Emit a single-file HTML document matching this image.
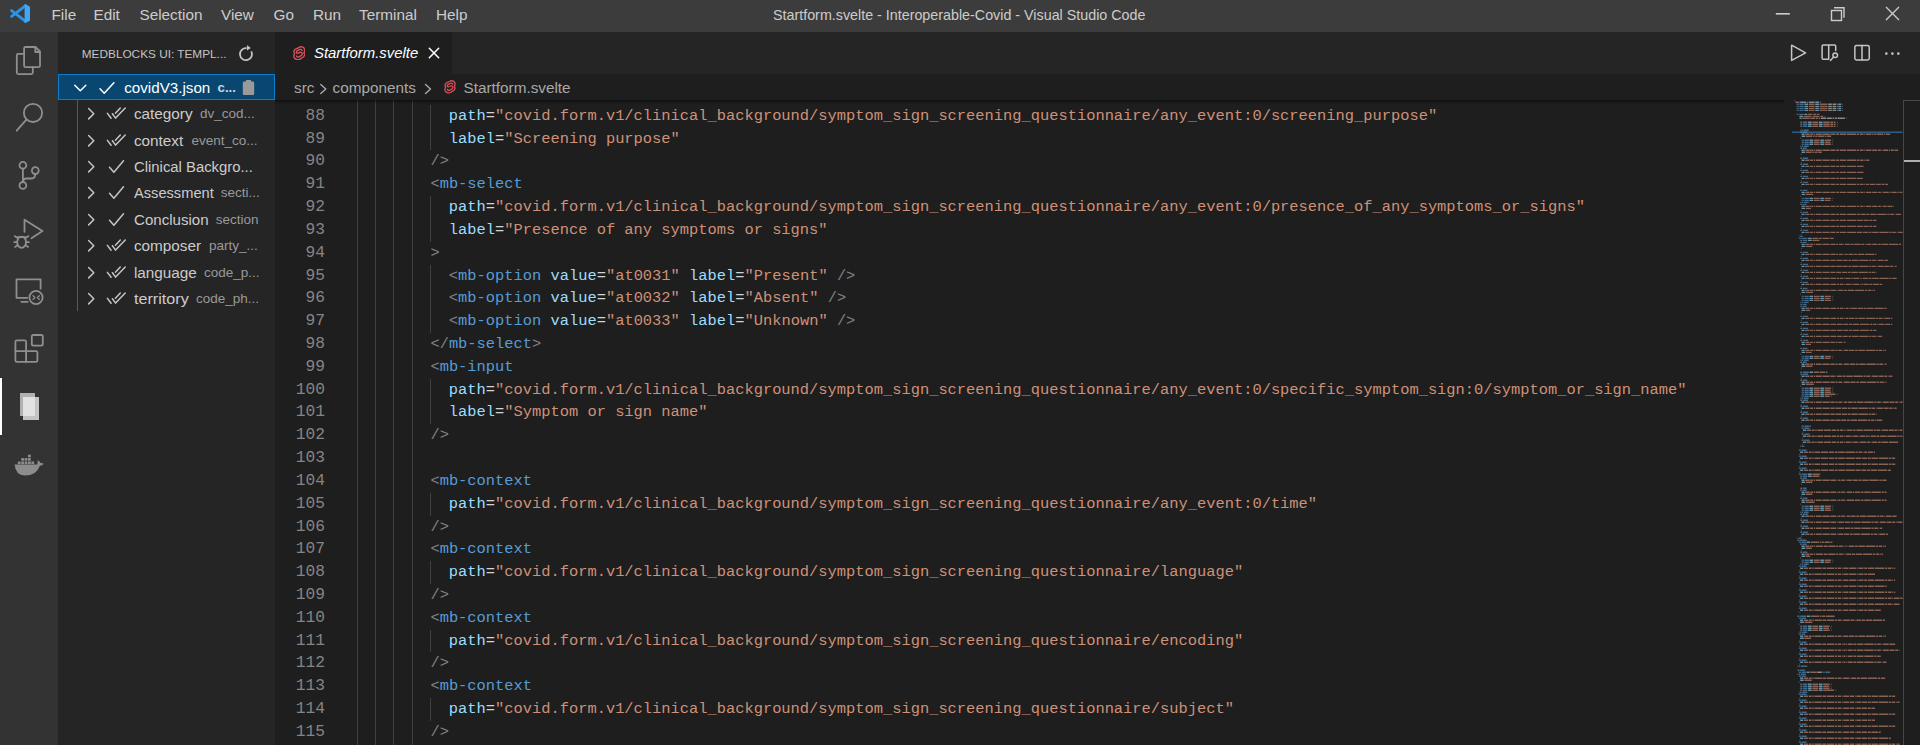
<!DOCTYPE html>
<html><head><meta charset="utf-8">
<style>
*{margin:0;padding:0;box-sizing:border-box}
html,body{width:1920px;height:745px;overflow:hidden;background:#1e1e1e;font-family:"Liberation Sans",sans-serif}
.abs{position:absolute}
#title{left:0;top:0;width:1920px;height:32px;background:#3c3c3c}
.menu{position:absolute;top:0;height:32px;line-height:30px;font-size:15.3px;color:#cccccc}
#wtitle{position:absolute;left:773px;top:0;height:32px;line-height:30px;font-size:14.3px;color:#cccccc;white-space:nowrap}
#act{left:0;top:32px;width:58px;height:713px;background:#333333}
#side{left:58px;top:32px;width:217px;height:713px;background:#252526}
#tabs{left:275px;top:32px;width:1645px;height:42px;background:#252526}
#crumbs{left:275px;top:74px;width:1645px;height:26.4px;background:#1e1e1e}
#editor{left:275px;top:100.4px;width:1645px;height:645px;background:#1e1e1e;overflow:hidden}
.ln{position:absolute;left:0;width:50px;text-align:right;font-family:"Liberation Mono",monospace;font-size:16.2px;line-height:22.82px;color:#858585;white-space:pre}
.cl{position:absolute;left:81.5px;font-family:"Liberation Mono",monospace;font-size:15.4px;line-height:22.82px;color:#d4d4d4;white-space:pre}
.g{position:absolute;width:1px;background:#404040}
.p{color:#808080}.t{color:#569cd6}.a{color:#9cdcfe}.s{color:#ce9178}
.row{position:absolute;left:0;width:217px;height:26.4px;font-size:15.3px;line-height:26.4px;color:#cccccc;white-space:nowrap}
.lab{height:26.4px;line-height:27.8px;font-size:15.3px;color:#cccccc;white-space:nowrap}
.dsc{height:26.4px;line-height:28.4px;font-size:13.5px;color:#999999;white-space:nowrap}
</style></head><body>
<div id="title" class="abs">
  <svg class="abs" style="left:0;top:0" width="40" height="32">
    <path d="M25.6 5.6 L11.6 16.4 M25.6 21.4 L11.6 10.6" stroke="#2b93e6" stroke-width="2.9" stroke-linecap="round"/>
    <path d="M24.6 4 L29.3 6.3 Q30 6.7 30 7.5 V19.9 Q30 20.7 29.3 21.1 L24.6 23.2 Z" fill="#3ea8f2"/>
  </svg>
  <div class="menu" style="left:51.5px">File</div>
  <div class="menu" style="left:93.5px">Edit</div>
  <div class="menu" style="left:139.5px">Selection</div>
  <div class="menu" style="left:221px">View</div>
  <div class="menu" style="left:273.5px">Go</div>
  <div class="menu" style="left:313px">Run</div>
  <div class="menu" style="left:359px">Terminal</div>
  <div class="menu" style="left:436px">Help</div>
  <div id="wtitle">Startform.svelte - Interoperable-Covid - Visual Studio Code</div>
  <svg class="abs" style="left:1760px;top:0" width="160" height="32">
    <rect x="1775.8" y="13" width="14" height="1.6" fill="#cccccc" transform="translate(-1760,0)"/>
    <g fill="none" stroke="#cccccc" stroke-width="1.4">
      <rect x="71.5" y="10.5" width="10" height="10"/>
      <path d="M74 7.7 H84 V17.7"/>
      <path d="M126 7 L139 20 M139 7 L126 20"/>
    </g>
  </svg>
</div>
<div id="act" class="abs">
  <svg class="abs" style="left:0;top:0" width="58" height="713" fill="none" stroke="#8f8f8f" stroke-width="1.8" stroke-linejoin="round" stroke-linecap="round">
    <path d="M25.6 15 H35.5 L40 19.5 V33.7 Q40 35.2 38.5 35.2 H25.6 Q24.1 35.2 24.1 33.7 V16.5 Q24.1 15 25.6 15 Z"/>
    <path d="M35.3 15.2 V20 H39.8"/>
    <path d="M24.1 21.8 H18.3 Q16.8 21.8 16.8 23.3 V40.6 Q16.8 42.1 18.3 42.1 H31.3 Q32.8 42.1 32.8 40.6 V35.2"/>
    <circle cx="33" cy="80.9" r="9.1"/>
    <path d="M26.6 87.4 L16.7 98.7"/>
    <circle cx="22.9" cy="133.2" r="3.4"/>
    <circle cx="35.3" cy="138.6" r="3.4"/>
    <circle cx="22.9" cy="153.4" r="3.4"/>
    <path d="M22.9 136.6 V150"/>
    <path d="M35.3 142 Q35.3 146.5 31.5 146.5 H26.5 Q22.9 146.5 22.9 150"/>
    <path d="M24.5 199.8 V187.7 L42.5 199 L31.5 206.3"/>
    <ellipse cx="21.6" cy="210.2" rx="4.4" ry="5.6"/>
    <path d="M17.2 205.2 H26"/>
    <path d="M14.8 204.1 L17.2 205.9 M14.3 210.2 H17.2 M15.1 214.9 L17.5 213.3 M28.4 204.1 L26 205.9 M28.9 210.2 H26 M28.1 214.9 L25.7 213.3"/>
    <path d="M27.2 265.8 H16.5 V247.3 H40.6 V256.7"/>
    <path d="M21.3 269.8 H27.7"/>
    <circle cx="36" cy="265.5" r="6.6"/>
    <path d="M33 263.8 L35 265.6 L33 267.4 M39.4 263.8 L37.4 265.6 L39.4 267.4" stroke-width="1.3"/>
    <path d="M17 308.4 H24.6 Q26.1 308.4 26.1 309.9 V319.1 H35.9 Q37.4 319.1 37.4 320.6 V328.4 Q37.4 329.9 35.9 329.9 H16.9 Q15.4 329.9 15.4 328.4 V309.9 Q15.4 308.4 17 308.4 Z"/>
    <path d="M15.4 319.1 H26.1 V329.9"/>
    <rect x="31.8" y="303" width="11" height="10.7" rx="1.6"/>
  </svg>
  <div class="abs" style="left:0;top:345.8px;width:2px;height:57.6px;background:#ffffff"></div>
  <div class="abs" style="left:19.7px;top:360.6px;width:15.8px;height:23.4px;background:#b0b0b0"></div>
  <div class="abs" style="left:23.4px;top:364.6px;width:15.6px;height:23.4px;background:#c4c4c4"></div>
  <div class="abs" style="left:23.4px;top:364.6px;width:12.1px;height:19.4px;background:#e2e2e2"></div>
  <svg class="abs" style="left:14px;top:420px" width="32" height="26" viewBox="0 0 32 26" fill="#8c8c8c">
    <rect x="3.8" y="9.5" width="2.8" height="2.6"/><rect x="7.2" y="9.5" width="2.8" height="2.6"/><rect x="10.6" y="9.5" width="2.8" height="2.6"/><rect x="14" y="9.5" width="2.8" height="2.6"/><rect x="17.4" y="9.5" width="2.8" height="2.6"/>
    <rect x="7.2" y="6.1" width="2.8" height="2.6"/><rect x="10.6" y="6.1" width="2.8" height="2.6"/><rect x="14" y="6.1" width="2.8" height="2.6"/>
    <rect x="14" y="2.7" width="2.8" height="2.6"/>
    <path d="M0.6 12.6 H23.2 Q24 10.4 23.5 8.2 Q25.7 9 26.5 11 Q28.7 10.6 29.6 12 Q28.2 13.7 25.9 13.7 Q22.3 23.6 11 23.6 Q1.6 23.6 0.6 12.6 Z"/>
  </svg>
</div>
<div id="side" class="abs">
  <div class="abs" style="left:23.8px;top:11.5px;height:20px;line-height:20px;font-size:11.8px;color:#c4c4c4;white-space:nowrap">MEDBLOCKS UI: TEMPL...</div>
  <svg class="abs" style="left:178px;top:10.8px" width="20" height="20">
    <path d="M15.3 8.4 A6 6 0 1 1 10.6 5.2" fill="none" stroke="#c5c5c5" stroke-width="1.8"/>
    <path d="M10.9 2 L14.8 4.9 L11 7.6 Z" fill="#c5c5c5"/>
  </svg>
  <div class="abs" style="left:0;top:41.8px;width:217px;height:26.4px;background:#094771;border:1px solid #0a7dcf"></div>
  <svg class="abs" style="left:0;top:41.8px" width="217" height="27" fill="none" stroke="#ffffff" stroke-width="1.5" stroke-linecap="round" stroke-linejoin="round">
    <path d="M16.8 11.3 L22.3 16.7 L27.8 11.3"/>
    <path d="M42 14.8 L46.2 19.2 L55.9 8.7"/>
  </svg>
  <div class="abs" style="left:66.2px;top:41.8px;height:26.4px;line-height:27.6px;font-size:15.2px;color:#ffffff;white-space:nowrap">covidV3.json</div>
  <div class="abs" style="left:159.6px;top:41.8px;height:26.4px;line-height:28px;font-size:13.2px;color:#c8d8ea;white-space:nowrap;font-weight:bold">c...</div>
  <svg class="abs" style="left:184px;top:47px" width="14" height="17">
    <rect x="0.8" y="2.6" width="11.4" height="13.4" rx="1.3" fill="#9a9a9a"/>
    <rect x="3.8" y="1" width="5.4" height="3.4" rx="1" fill="#9a9a9a"/>
  </svg>
  <div class="abs" style="left:19.2px;top:68.2px;width:1px;height:211.2px;background:#585858"></div>
  <svg class="abs" style="left:0;top:68.2px" width="80" height="27" fill="none" stroke="#c5c5c5" stroke-width="1.5" stroke-linecap="round" stroke-linejoin="round">
    <path d="M30.6 8.5 L35.8 13.7 L30.6 18.9"/>
    <path d="M49.4 13.4 L53.1 18.2 M54.4 13.7 L57.6 18.1 L67.2 8.1 M57.4 13.3 L62.3 8.1"/>
  </svg>
  <div class="abs lab" style="left:75.9px;top:68.2px">category</div>
  <div class="abs dsc" style="left:142.0px;top:68.2px">dv_cod...</div>
  <svg class="abs" style="left:0;top:94.6px" width="80" height="27" fill="none" stroke="#c5c5c5" stroke-width="1.5" stroke-linecap="round" stroke-linejoin="round">
    <path d="M30.6 8.5 L35.8 13.7 L30.6 18.9"/>
    <path d="M49.4 13.4 L53.1 18.2 M54.4 13.7 L57.6 18.1 L67.2 8.1 M57.4 13.3 L62.3 8.1"/>
  </svg>
  <div class="abs lab" style="left:75.9px;top:94.6px">context</div>
  <div class="abs dsc" style="left:133.5px;top:94.6px">event_co...</div>
  <svg class="abs" style="left:0;top:121.0px" width="80" height="27" fill="none" stroke="#c5c5c5" stroke-width="1.5" stroke-linecap="round" stroke-linejoin="round">
    <path d="M30.6 8.5 L35.8 13.7 L30.6 18.9"/>
    <path d="M51.5 14.2 L55.9 19.2 L65.5 7.8"/>
  </svg>
  <div class="abs lab" style="left:75.9px;top:121.0px;transform:scaleX(0.971);transform-origin:0 0">Clinical Backgro...</div>
  <svg class="abs" style="left:0;top:147.4px" width="80" height="27" fill="none" stroke="#c5c5c5" stroke-width="1.5" stroke-linecap="round" stroke-linejoin="round">
    <path d="M30.6 8.5 L35.8 13.7 L30.6 18.9"/>
    <path d="M51.5 14.2 L55.9 19.2 L65.5 7.8"/>
  </svg>
  <div class="abs lab" style="left:75.9px;top:147.4px;transform:scaleX(0.957);transform-origin:0 0">Assessment</div>
  <div class="abs dsc" style="left:162.7px;top:147.4px">secti...</div>
  <svg class="abs" style="left:0;top:173.8px" width="80" height="27" fill="none" stroke="#c5c5c5" stroke-width="1.5" stroke-linecap="round" stroke-linejoin="round">
    <path d="M30.6 8.5 L35.8 13.7 L30.6 18.9"/>
    <path d="M51.5 14.2 L55.9 19.2 L65.5 7.8"/>
  </svg>
  <div class="abs lab" style="left:75.9px;top:173.8px;transform:scaleX(0.985);transform-origin:0 0">Conclusion</div>
  <div class="abs dsc" style="left:157.7px;top:173.8px">section</div>
  <svg class="abs" style="left:0;top:200.2px" width="80" height="27" fill="none" stroke="#c5c5c5" stroke-width="1.5" stroke-linecap="round" stroke-linejoin="round">
    <path d="M30.6 8.5 L35.8 13.7 L30.6 18.9"/>
    <path d="M49.4 13.4 L53.1 18.2 M54.4 13.7 L57.6 18.1 L67.2 8.1 M57.4 13.3 L62.3 8.1"/>
  </svg>
  <div class="abs lab" style="left:75.9px;top:200.2px">composer</div>
  <div class="abs dsc" style="left:151.0px;top:200.2px">party_...</div>
  <svg class="abs" style="left:0;top:226.6px" width="80" height="27" fill="none" stroke="#c5c5c5" stroke-width="1.5" stroke-linecap="round" stroke-linejoin="round">
    <path d="M30.6 8.5 L35.8 13.7 L30.6 18.9"/>
    <path d="M49.4 13.4 L53.1 18.2 M54.4 13.7 L57.6 18.1 L67.2 8.1 M57.4 13.3 L62.3 8.1"/>
  </svg>
  <div class="abs lab" style="left:75.9px;top:226.6px">language</div>
  <div class="abs dsc" style="left:146.0px;top:226.6px">code_p...</div>
  <svg class="abs" style="left:0;top:253.0px" width="80" height="27" fill="none" stroke="#c5c5c5" stroke-width="1.5" stroke-linecap="round" stroke-linejoin="round">
    <path d="M30.6 8.5 L35.8 13.7 L30.6 18.9"/>
    <path d="M49.4 13.4 L53.1 18.2 M54.4 13.7 L57.6 18.1 L67.2 8.1 M57.4 13.3 L62.3 8.1"/>
  </svg>
  <div class="abs lab" style="left:75.9px;top:253.0px;transform:scaleX(1.056);transform-origin:0 0">territory</div>
  <div class="abs dsc" style="left:138.0px;top:253.0px">code_ph...</div>
</div>
<div id="tabs" class="abs">
  <div class="abs" style="left:0;top:0;width:177px;height:42px;background:#1e1e1e"></div>
  <svg class="abs" style="left:17.7px;top:13.5px" width="12.5" height="14.5" viewBox="0 0 12.2 14.2"><g fill="none" stroke="#d9505a" stroke-width="1.35" stroke-linecap="round" stroke-linejoin="round">
    <path d="M6.6 1 C8.6 0.3 10.9 1.4 11.3 3.4 C11.6 4.6 11.3 5.8 10.6 6.7 C11.5 8 11.3 9.8 10.1 10.8 L6.6 13.1 C4.6 14.1 1.6 13.1 0.9 10.8 C0.6 9.6 0.8 8.4 1.5 7.4 C0.7 6.1 0.9 4.3 2.1 3.3 Z"/>
    <path d="M8.9 4.4 C8.4 3.3 7.1 3 6.1 3.6 L3.7 5.1 C2.9 5.7 3.1 6.9 4.1 7.1 C4.6 7.2 5.1 7.1 5.7 6.8 L6.6 6.3 C7.5 5.9 8.7 6.4 9 7.3 C9.2 8 8.9 8.7 8.3 9.1 L5.9 10.6 C4.9 11.2 3.6 10.7 3.3 9.7"/>
  </g></svg>
  <div class="abs" style="left:39px;top:0;height:42px;line-height:43.6px;font-size:14.9px;font-style:italic;color:#ffffff;white-space:nowrap">Startform.svelte</div>
  <svg class="abs" style="left:153px;top:15px" width="12" height="12" fill="none" stroke="#ffffff" stroke-width="1.5" stroke-linecap="round">
    <path d="M1.3 1.3 L10.7 10.7 M10.7 1.3 L1.3 10.7"/>
  </svg>
  <svg class="abs" style="left:1510px;top:8px" width="130" height="26" fill="none" stroke="#c5c5c5" stroke-width="1.5" stroke-linejoin="round" stroke-linecap="round">
    <path d="M6.6 5.2 L20.6 12.8 L6.6 20.4 Z"/>
    <path d="M43.7 19.2 H38.3 Q37.1 19.2 37.1 18 V6.1 Q37.1 4.9 38.3 4.9 H49.5 Q50.7 4.9 50.7 6.1 V10.6 M43.7 5 V19.2"/>
    <circle cx="50.2" cy="15.3" r="2.3"/>
    <path d="M48.6 16.9 L45.4 20.4"/>
    <rect x="69.85" y="5.55" width="14.4" height="14.4" rx="1.6"/>
    <path d="M77 5.6 V19.9"/>
    <circle cx="101.3" cy="13.6" r="1.3" fill="#c5c5c5" stroke="none"/>
    <circle cx="107.4" cy="13.6" r="1.3" fill="#c5c5c5" stroke="none"/>
    <circle cx="113.3" cy="13.6" r="1.3" fill="#c5c5c5" stroke="none"/>
  </svg>
</div>
<div id="crumbs" class="abs">
  <div class="abs" style="left:19px;top:0;height:26.4px;line-height:27.1px;font-size:15.3px;color:#a9a9a9;white-space:nowrap">src</div>
  <div class="abs" style="left:57.5px;top:0;height:26.4px;line-height:27.1px;font-size:15.3px;color:#a9a9a9;white-space:nowrap">components</div>
  <div class="abs" style="left:188.5px;top:0;height:26.4px;line-height:27.1px;font-size:15.3px;color:#a9a9a9;white-space:nowrap">Startform.svelte</div>
  <svg class="abs" style="left:168.6px;top:6.3px" width="12" height="13.6" viewBox="0 0 12.2 14.2"><g fill="none" stroke="#d9505a" stroke-width="1.35" stroke-linecap="round" stroke-linejoin="round">
    <path d="M6.6 1 C8.6 0.3 10.9 1.4 11.3 3.4 C11.6 4.6 11.3 5.8 10.6 6.7 C11.5 8 11.3 9.8 10.1 10.8 L6.6 13.1 C4.6 14.1 1.6 13.1 0.9 10.8 C0.6 9.6 0.8 8.4 1.5 7.4 C0.7 6.1 0.9 4.3 2.1 3.3 Z"/>
    <path d="M8.9 4.4 C8.4 3.3 7.1 3 6.1 3.6 L3.7 5.1 C2.9 5.7 3.1 6.9 4.1 7.1 C4.6 7.2 5.1 7.1 5.7 6.8 L6.6 6.3 C7.5 5.9 8.7 6.4 9 7.3 C9.2 8 8.9 8.7 8.3 9.1 L5.9 10.6 C4.9 11.2 3.6 10.7 3.3 9.7"/>
  </g></svg>
  <svg class="abs" style="left:0;top:0" width="300" height="27" fill="none" stroke="#a9a9a9" stroke-width="1.4" stroke-linecap="round" stroke-linejoin="round">
    <path d="M45.8 10.4 L50.8 15 L45.8 19.6"/>
    <path d="M150.5 10.4 L155.5 15 L150.5 19.6"/>
  </svg>
</div>
<div id="editor" class="abs">
<div class="ln" style="top:4.40px">88</div>
<div class="cl" style="top:4.40px">          <span class="a">path</span>=<span class="s">&quot;covid.form.v1/clinical_background/symptom_sign_screening_questionnaire/any_event:0/screening_purpose&quot;</span></div>
<div class="ln" style="top:27.22px">89</div>
<div class="cl" style="top:27.22px">          <span class="a">label</span>=<span class="s">&quot;Screening purpose&quot;</span></div>
<div class="ln" style="top:50.04px">90</div>
<div class="cl" style="top:50.04px">        <span class="p">/&gt;</span></div>
<div class="ln" style="top:72.86px">91</div>
<div class="cl" style="top:72.86px">        <span class="p">&lt;</span><span class="t">mb-select</span></div>
<div class="ln" style="top:95.68px">92</div>
<div class="cl" style="top:95.68px">          <span class="a">path</span>=<span class="s">&quot;covid.form.v1/clinical_background/symptom_sign_screening_questionnaire/any_event:0/presence_of_any_symptoms_or_signs&quot;</span></div>
<div class="ln" style="top:118.50px">93</div>
<div class="cl" style="top:118.50px">          <span class="a">label</span>=<span class="s">&quot;Presence of any symptoms or signs&quot;</span></div>
<div class="ln" style="top:141.32px">94</div>
<div class="cl" style="top:141.32px">        <span class="p">&gt;</span></div>
<div class="ln" style="top:164.14px">95</div>
<div class="cl" style="top:164.14px">          <span class="p">&lt;</span><span class="t">mb-option</span> <span class="a">value</span>=<span class="s">&quot;at0031&quot;</span> <span class="a">label</span>=<span class="s">&quot;Present&quot;</span> <span class="p">/&gt;</span></div>
<div class="ln" style="top:186.96px">96</div>
<div class="cl" style="top:186.96px">          <span class="p">&lt;</span><span class="t">mb-option</span> <span class="a">value</span>=<span class="s">&quot;at0032&quot;</span> <span class="a">label</span>=<span class="s">&quot;Absent&quot;</span> <span class="p">/&gt;</span></div>
<div class="ln" style="top:209.78px">97</div>
<div class="cl" style="top:209.78px">          <span class="p">&lt;</span><span class="t">mb-option</span> <span class="a">value</span>=<span class="s">&quot;at0033&quot;</span> <span class="a">label</span>=<span class="s">&quot;Unknown&quot;</span> <span class="p">/&gt;</span></div>
<div class="ln" style="top:232.60px">98</div>
<div class="cl" style="top:232.60px">        <span class="p">&lt;/</span><span class="t">mb-select</span><span class="p">&gt;</span></div>
<div class="ln" style="top:255.42px">99</div>
<div class="cl" style="top:255.42px">        <span class="p">&lt;</span><span class="t">mb-input</span></div>
<div class="ln" style="top:278.24px">100</div>
<div class="cl" style="top:278.24px">          <span class="a">path</span>=<span class="s">&quot;covid.form.v1/clinical_background/symptom_sign_screening_questionnaire/any_event:0/specific_symptom_sign:0/symptom_or_sign_name&quot;</span></div>
<div class="ln" style="top:301.06px">101</div>
<div class="cl" style="top:301.06px">          <span class="a">label</span>=<span class="s">&quot;Symptom or sign name&quot;</span></div>
<div class="ln" style="top:323.88px">102</div>
<div class="cl" style="top:323.88px">        <span class="p">/&gt;</span></div>
<div class="ln" style="top:346.70px">103</div>
<div class="ln" style="top:369.52px">104</div>
<div class="cl" style="top:369.52px">        <span class="p">&lt;</span><span class="t">mb-context</span></div>
<div class="ln" style="top:392.34px">105</div>
<div class="cl" style="top:392.34px">          <span class="a">path</span>=<span class="s">&quot;covid.form.v1/clinical_background/symptom_sign_screening_questionnaire/any_event:0/time&quot;</span></div>
<div class="ln" style="top:415.16px">106</div>
<div class="cl" style="top:415.16px">        <span class="p">/&gt;</span></div>
<div class="ln" style="top:437.98px">107</div>
<div class="cl" style="top:437.98px">        <span class="p">&lt;</span><span class="t">mb-context</span></div>
<div class="ln" style="top:460.80px">108</div>
<div class="cl" style="top:460.80px">          <span class="a">path</span>=<span class="s">&quot;covid.form.v1/clinical_background/symptom_sign_screening_questionnaire/language&quot;</span></div>
<div class="ln" style="top:483.62px">109</div>
<div class="cl" style="top:483.62px">        <span class="p">/&gt;</span></div>
<div class="ln" style="top:506.44px">110</div>
<div class="cl" style="top:506.44px">        <span class="p">&lt;</span><span class="t">mb-context</span></div>
<div class="ln" style="top:529.26px">111</div>
<div class="cl" style="top:529.26px">          <span class="a">path</span>=<span class="s">&quot;covid.form.v1/clinical_background/symptom_sign_screening_questionnaire/encoding&quot;</span></div>
<div class="ln" style="top:552.08px">112</div>
<div class="cl" style="top:552.08px">        <span class="p">/&gt;</span></div>
<div class="ln" style="top:574.90px">113</div>
<div class="cl" style="top:574.90px">        <span class="p">&lt;</span><span class="t">mb-context</span></div>
<div class="ln" style="top:597.72px">114</div>
<div class="cl" style="top:597.72px">          <span class="a">path</span>=<span class="s">&quot;covid.form.v1/clinical_background/symptom_sign_screening_questionnaire/subject&quot;</span></div>
<div class="ln" style="top:620.54px">115</div>
<div class="cl" style="top:620.54px">        <span class="p">/&gt;</span></div>
<div class="g" style="left:81.50px;top:0.00px;height:645.00px"></div>
<div class="g" style="left:99.98px;top:0.00px;height:645.00px"></div>
<div class="g" style="left:118.46px;top:0.00px;height:645.00px"></div>
<div class="g" style="left:136.94px;top:0.00px;height:645.00px"></div>
<div class="g" style="left:155.42px;top:4.40px;height:45.64px"></div>
<div class="g" style="left:155.42px;top:95.68px;height:45.64px"></div>
<div class="g" style="left:155.42px;top:164.14px;height:68.46px"></div>
<div class="g" style="left:155.42px;top:278.24px;height:45.64px"></div>
<div class="g" style="left:155.42px;top:392.34px;height:22.82px"></div>
<div class="g" style="left:155.42px;top:460.80px;height:22.82px"></div>
<div class="g" style="left:155.42px;top:529.26px;height:22.82px"></div>
<div class="g" style="left:155.42px;top:597.72px;height:22.82px"></div>
<svg class="abs" style="left:1509px;top:0" width="120" height="645">
<rect x="7.900000000000091" y="31.4" width="110.7" height="1.7" fill="#2a5a85"/>
<path fill="#808080" opacity="0.6" d="M10.40 -0.3h0.72v1.3h-0.72zM11.12 1.6h0.72v1.3h-0.72zM34.88 1.6h0.72v1.3h-0.72zM12.56 3.6h0.72v1.3h-0.72zM57.92 3.6h0.72v1.3h-0.72zM12.56 5.7h0.72v1.3h-0.72zM57.92 5.7h0.72v1.3h-0.72zM12.56 7.7h0.72v1.3h-0.72zM57.92 7.7h0.72v1.3h-0.72zM12.56 9.7h0.72v1.3h-0.72zM57.92 9.7h0.72v1.3h-0.72zM12.56 13.7h0.72v1.3h-0.72zM34.88 13.7h0.72v1.3h-0.72zM39.92 15.7h0.72v1.3h-0.72zM62.24 17.6h0.72v1.3h-0.72zM16.16 21.6h0.72v1.3h-0.72zM52.88 21.6h0.72v1.3h-0.72zM16.16 23.6h0.72v1.3h-0.72zM52.88 23.6h0.72v1.3h-0.72zM16.16 25.6h0.72v1.3h-0.72zM52.88 25.6h0.72v1.3h-0.72zM16.16 29.6h0.72v1.3h-0.72zM24.08 29.6h0.72v1.3h-0.72zM16.16 31.6h0.72v1.3h-0.72zM16.16 37.6h0.72v1.3h-0.72zM17.60 39.6h0.72v1.3h-0.72zM48.56 39.6h0.72v1.3h-0.72zM17.60 41.6h0.72v1.3h-0.72zM47.84 41.6h0.72v1.3h-0.72zM17.60 43.6h0.72v1.3h-0.72zM48.56 43.6h0.72v1.3h-0.72zM16.16 45.6h0.72v1.3h-0.72zM24.08 45.6h0.72v1.3h-0.72zM16.16 47.6h0.72v1.3h-0.72zM16.88 53.6h0.72v1.3h-0.72zM16.16 57.6h0.72v1.3h-0.72zM16.88 61.6h0.72v1.3h-0.72zM16.16 63.6h0.72v1.3h-0.72zM16.88 67.7h0.72v1.3h-0.72zM16.16 69.7h0.72v1.3h-0.72zM16.88 73.7h0.72v1.3h-0.72zM16.16 75.7h0.72v1.3h-0.72zM16.88 79.7h0.72v1.3h-0.72zM16.16 81.7h0.72v1.3h-0.72zM16.88 85.7h0.72v1.3h-0.72zM16.16 89.7h0.72v1.3h-0.72zM16.16 95.7h0.72v1.3h-0.72zM17.60 97.7h0.72v1.3h-0.72zM48.56 97.7h0.72v1.3h-0.72zM17.60 99.7h0.72v1.3h-0.72zM47.84 99.7h0.72v1.3h-0.72zM16.16 101.7h0.72v1.3h-0.72zM24.08 101.7h0.72v1.3h-0.72zM16.16 103.7h0.72v1.3h-0.72zM16.88 109.7h0.72v1.3h-0.72zM16.16 111.7h0.72v1.3h-0.72zM16.88 115.7h0.72v1.3h-0.72zM16.16 117.7h0.72v1.3h-0.72zM16.88 121.7h0.72v1.3h-0.72zM16.16 123.7h0.72v1.3h-0.72zM16.88 127.7h0.72v1.3h-0.72zM16.16 129.7h0.72v1.3h-0.72zM16.88 133.7h0.72v1.3h-0.72zM14.72 135.7h0.72v1.3h-0.72zM18.32 135.7h0.72v1.3h-0.72zM14.72 137.7h0.72v1.3h-0.72zM49.28 137.7h0.72v1.3h-0.72zM16.16 139.7h0.72v1.3h-0.72zM34.88 139.7h0.72v1.3h-0.72zM16.16 141.7h0.72v1.3h-0.72zM16.88 147.7h0.72v1.3h-0.72zM16.16 151.7h0.72v1.3h-0.72zM16.88 155.7h0.72v1.3h-0.72zM16.16 157.7h0.72v1.3h-0.72zM16.88 161.7h0.72v1.3h-0.72zM16.16 163.7h0.72v1.3h-0.72zM16.88 167.7h0.72v1.3h-0.72zM16.16 169.7h0.72v1.3h-0.72zM16.88 173.7h0.72v1.3h-0.72zM16.16 175.7h0.72v1.3h-0.72zM16.88 179.7h0.72v1.3h-0.72zM16.16 181.7h0.72v1.3h-0.72zM16.88 185.7h0.72v1.3h-0.72zM16.16 187.7h0.72v1.3h-0.72zM16.16 193.7h0.72v1.3h-0.72zM17.60 195.7h0.72v1.3h-0.72zM48.56 195.7h0.72v1.3h-0.72zM17.60 197.7h0.72v1.3h-0.72zM47.84 197.7h0.72v1.3h-0.72zM17.60 199.7h0.72v1.3h-0.72zM48.56 199.7h0.72v1.3h-0.72zM16.16 201.7h0.72v1.3h-0.72zM24.08 201.7h0.72v1.3h-0.72zM16.16 203.7h0.72v1.3h-0.72zM16.16 205.7h0.72v1.3h-0.72zM16.88 211.7h0.72v1.3h-0.72zM16.16 215.7h0.72v1.3h-0.72zM16.88 219.7h0.72v1.3h-0.72zM16.16 221.7h0.72v1.3h-0.72zM16.88 225.7h0.72v1.3h-0.72zM16.16 227.7h0.72v1.3h-0.72zM16.88 231.7h0.72v1.3h-0.72zM16.16 233.7h0.72v1.3h-0.72zM16.88 237.7h0.72v1.3h-0.72zM16.16 239.7h0.72v1.3h-0.72zM16.16 247.7h0.72v1.3h-0.72zM16.16 253.7h0.72v1.3h-0.72zM17.60 255.7h0.72v1.3h-0.72zM48.56 255.7h0.72v1.3h-0.72zM17.60 257.6h0.72v1.3h-0.72zM47.84 257.6h0.72v1.3h-0.72zM16.16 259.6h0.72v1.3h-0.72zM24.08 259.6h0.72v1.3h-0.72zM16.16 261.6h0.72v1.3h-0.72zM16.88 267.6h0.72v1.3h-0.72zM16.16 271.6h0.72v1.3h-0.72zM42.80 271.6h0.72v1.3h-0.72zM16.16 273.6h0.72v1.3h-0.72zM16.88 277.6h0.72v1.3h-0.72zM16.16 279.6h0.72v1.3h-0.72zM16.16 285.6h0.72v1.3h-0.72zM17.60 287.6h0.72v1.3h-0.72zM48.56 287.6h0.72v1.3h-0.72zM17.60 289.6h0.72v1.3h-0.72zM47.84 289.6h0.72v1.3h-0.72zM17.60 291.6h0.72v1.3h-0.72zM48.56 291.6h0.72v1.3h-0.72zM17.60 293.6h0.72v1.3h-0.72zM52.88 293.6h0.72v1.3h-0.72zM17.60 295.6h0.72v1.3h-0.72zM47.12 295.6h0.72v1.3h-0.72zM16.16 297.6h0.72v1.3h-0.72zM24.08 297.6h0.72v1.3h-0.72zM16.16 299.6h0.72v1.3h-0.72zM16.88 303.6h0.72v1.3h-0.72zM16.16 305.6h0.72v1.3h-0.72zM16.88 309.6h0.72v1.3h-0.72zM16.16 311.6h0.72v1.3h-0.72zM16.88 315.6h0.72v1.3h-0.72zM16.16 317.6h0.72v1.3h-0.72zM16.88 321.6h0.72v1.3h-0.72zM17.60 325.6h0.72v1.3h-0.72zM26.24 325.6h0.72v1.3h-0.72zM17.60 327.6h0.72v1.3h-0.72zM18.32 331.6h0.72v1.3h-0.72zM17.60 333.6h0.72v1.3h-0.72zM18.32 337.6h0.72v1.3h-0.72zM17.60 339.6h0.72v1.3h-0.72zM18.32 343.6h0.72v1.3h-0.72zM16.16 345.6h0.72v1.3h-0.72zM19.76 345.6h0.72v1.3h-0.72zM14.72 349.6h0.72v1.3h-0.72zM15.44 353.6h0.72v1.3h-0.72zM14.72 355.6h0.72v1.3h-0.72zM15.44 359.6h0.72v1.3h-0.72zM14.72 361.6h0.72v1.3h-0.72zM15.44 365.6h0.72v1.3h-0.72zM14.72 367.6h0.72v1.3h-0.72zM15.44 371.6h0.72v1.3h-0.72zM14.72 373.6h0.72v1.3h-0.72zM35.60 373.6h0.72v1.3h-0.72zM16.16 375.6h0.72v1.3h-0.72zM34.88 375.6h0.72v1.3h-0.72zM16.16 377.6h0.72v1.3h-0.72zM16.88 383.6h0.72v1.3h-0.72zM16.16 387.6h0.72v1.3h-0.72zM16.16 389.6h0.72v1.3h-0.72zM16.88 395.6h0.72v1.3h-0.72zM16.16 397.6h0.72v1.3h-0.72zM16.16 403.6h0.72v1.3h-0.72zM17.60 405.6h0.72v1.3h-0.72zM48.56 405.6h0.72v1.3h-0.72zM17.60 407.6h0.72v1.3h-0.72zM47.84 407.6h0.72v1.3h-0.72zM17.60 409.6h0.72v1.3h-0.72zM48.56 409.6h0.72v1.3h-0.72zM16.16 411.6h0.72v1.3h-0.72zM24.08 411.6h0.72v1.3h-0.72zM16.16 413.6h0.72v1.3h-0.72zM16.88 417.6h0.72v1.3h-0.72zM16.16 419.6h0.72v1.3h-0.72zM16.88 423.6h0.72v1.3h-0.72zM16.16 425.6h0.72v1.3h-0.72zM16.88 429.6h0.72v1.3h-0.72zM16.16 431.6h0.72v1.3h-0.72zM16.88 435.6h0.72v1.3h-0.72zM13.28 437.6h0.72v1.3h-0.72zM16.88 437.6h0.72v1.3h-0.72zM13.28 439.6h0.72v1.3h-0.72zM21.92 439.6h0.72v1.3h-0.72zM14.72 441.6h0.72v1.3h-0.72zM47.84 441.6h0.72v1.3h-0.72zM16.16 443.6h0.72v1.3h-0.72zM16.88 449.6h0.72v1.3h-0.72zM16.16 451.6h0.72v1.3h-0.72zM16.16 457.6h0.72v1.3h-0.72zM17.60 459.6h0.72v1.3h-0.72zM48.56 459.6h0.72v1.3h-0.72zM17.60 461.6h0.72v1.3h-0.72zM47.84 461.6h0.72v1.3h-0.72zM16.16 463.6h0.72v1.3h-0.72zM24.08 463.6h0.72v1.3h-0.72zM14.72 465.6h0.72v1.3h-0.72zM15.44 469.6h0.72v1.3h-0.72zM14.72 471.6h0.72v1.3h-0.72zM15.44 475.6h0.72v1.3h-0.72zM14.72 477.6h0.72v1.3h-0.72zM15.44 481.6h0.72v1.3h-0.72zM14.72 483.6h0.72v1.3h-0.72zM15.44 487.6h0.72v1.3h-0.72zM14.72 489.6h0.72v1.3h-0.72zM15.44 493.6h0.72v1.3h-0.72zM14.72 495.6h0.72v1.3h-0.72zM15.44 499.6h0.72v1.3h-0.72zM14.72 501.6h0.72v1.3h-0.72zM15.44 505.6h0.72v1.3h-0.72zM14.72 507.6h0.72v1.3h-0.72zM15.44 511.6h0.72v1.3h-0.72zM13.28 515.6h0.72v1.3h-0.72zM50.00 515.6h0.72v1.3h-0.72zM14.72 517.6h0.72v1.3h-0.72zM14.72 523.6h0.72v1.3h-0.72zM16.16 525.6h0.72v1.3h-0.72zM47.12 525.6h0.72v1.3h-0.72zM16.16 527.6h0.72v1.3h-0.72zM46.40 527.6h0.72v1.3h-0.72zM16.16 529.6h0.72v1.3h-0.72zM47.12 529.6h0.72v1.3h-0.72zM14.72 531.6h0.72v1.3h-0.72zM22.64 531.6h0.72v1.3h-0.72zM14.72 533.6h0.72v1.3h-0.72zM15.44 539.6h0.72v1.3h-0.72zM14.72 541.6h0.72v1.3h-0.72zM15.44 545.6h0.72v1.3h-0.72zM14.72 547.6h0.72v1.3h-0.72zM15.44 551.6h0.72v1.3h-0.72zM14.72 553.6h0.72v1.3h-0.72zM15.44 557.6h0.72v1.3h-0.72zM14.72 559.6h0.72v1.3h-0.72zM15.44 563.6h0.72v1.3h-0.72zM13.28 565.6h0.72v1.3h-0.72zM22.64 565.6h0.72v1.3h-0.72zM13.28 569.6h0.72v1.3h-0.72zM20.48 569.6h0.72v1.3h-0.72zM14.72 571.6h0.72v1.3h-0.72zM32.72 571.6h0.72v1.3h-0.72zM37.76 571.6h0.72v1.3h-0.72zM45.68 571.6h0.72v1.3h-0.72zM13.28 573.6h0.72v1.3h-0.72zM21.20 573.6h0.72v1.3h-0.72zM14.72 575.6h0.72v1.3h-0.72zM14.72 581.6h0.72v1.3h-0.72zM16.16 583.6h0.72v1.3h-0.72zM47.12 583.6h0.72v1.3h-0.72zM16.16 585.6h0.72v1.3h-0.72zM46.40 585.6h0.72v1.3h-0.72zM16.16 587.6h0.72v1.3h-0.72zM47.12 587.6h0.72v1.3h-0.72zM16.16 589.6h0.72v1.3h-0.72zM51.44 589.6h0.72v1.3h-0.72zM14.72 591.6h0.72v1.3h-0.72zM22.64 591.6h0.72v1.3h-0.72zM14.72 593.6h0.72v1.3h-0.72zM15.44 597.6h0.72v1.3h-0.72zM14.72 599.6h0.72v1.3h-0.72zM15.44 603.6h0.72v1.3h-0.72zM14.72 605.6h0.72v1.3h-0.72zM15.44 609.6h0.72v1.3h-0.72zM14.72 611.6h0.72v1.3h-0.72zM15.44 615.6h0.72v1.3h-0.72zM14.72 617.6h0.72v1.3h-0.72zM15.44 621.6h0.72v1.3h-0.72zM14.72 623.6h0.72v1.3h-0.72zM15.44 627.6h0.72v1.3h-0.72zM14.72 629.6h0.72v1.3h-0.72zM15.44 633.6h0.72v1.3h-0.72zM14.72 635.6h0.72v1.3h-0.72zM15.44 639.6h0.72v1.3h-0.72zM14.72 641.6h0.72v1.3h-0.72z"/>
<path fill="#569cd6" opacity="0.6" d="M36.32 1.6h0.72v1.3h-0.72zM13.28 3.6h1.44v1.3h-1.44zM15.44 3.6h4.32v1.3h-4.32zM13.28 5.7h1.44v1.3h-1.44zM15.44 5.7h4.32v1.3h-4.32zM13.28 7.7h1.44v1.3h-1.44zM15.44 7.7h4.32v1.3h-4.32zM13.28 9.7h1.44v1.3h-1.44zM15.44 9.7h4.32v1.3h-4.32zM13.28 13.7h1.44v1.3h-1.44zM15.44 13.7h4.32v1.3h-4.32zM16.88 21.6h1.44v1.3h-1.44zM19.04 21.6h4.32v1.3h-4.32zM16.88 23.6h1.44v1.3h-1.44zM19.04 23.6h4.32v1.3h-4.32zM16.88 25.6h1.44v1.3h-1.44zM19.04 25.6h4.32v1.3h-4.32zM17.60 29.6h1.44v1.3h-1.44zM19.76 29.6h4.32v1.3h-4.32zM16.88 31.6h1.44v1.3h-1.44zM19.04 31.6h4.32v1.3h-4.32zM18.32 39.6h1.44v1.3h-1.44zM20.48 39.6h4.32v1.3h-4.32zM18.32 41.6h1.44v1.3h-1.44zM20.48 41.6h4.32v1.3h-4.32zM18.32 43.6h1.44v1.3h-1.44zM20.48 43.6h4.32v1.3h-4.32zM17.60 45.6h1.44v1.3h-1.44zM19.76 45.6h4.32v1.3h-4.32zM16.88 47.6h1.44v1.3h-1.44zM19.04 47.6h3.60v1.3h-3.60zM16.88 57.6h1.44v1.3h-1.44zM19.04 57.6h5.04v1.3h-5.04zM16.88 63.6h1.44v1.3h-1.44zM19.04 63.6h5.04v1.3h-5.04zM16.88 69.7h1.44v1.3h-1.44zM19.04 69.7h5.04v1.3h-5.04zM16.88 75.7h1.44v1.3h-1.44zM19.04 75.7h5.04v1.3h-5.04zM16.88 81.7h1.44v1.3h-1.44zM19.04 81.7h5.04v1.3h-5.04zM16.88 89.7h1.44v1.3h-1.44zM19.04 89.7h4.32v1.3h-4.32zM18.32 97.7h1.44v1.3h-1.44zM20.48 97.7h4.32v1.3h-4.32zM18.32 99.7h1.44v1.3h-1.44zM20.48 99.7h4.32v1.3h-4.32zM17.60 101.7h1.44v1.3h-1.44zM19.76 101.7h4.32v1.3h-4.32zM16.88 103.7h1.44v1.3h-1.44zM19.04 103.7h3.60v1.3h-3.60zM16.88 111.7h1.44v1.3h-1.44zM19.04 111.7h5.04v1.3h-5.04zM16.88 117.7h1.44v1.3h-1.44zM19.04 117.7h5.04v1.3h-5.04zM16.88 123.7h1.44v1.3h-1.44zM19.04 123.7h5.04v1.3h-5.04zM16.88 129.7h1.44v1.3h-1.44zM19.04 129.7h5.04v1.3h-5.04zM16.16 135.7h2.16v1.3h-2.16zM15.44 137.7h1.44v1.3h-1.44zM17.60 137.7h5.76v1.3h-5.76zM16.88 139.7h1.44v1.3h-1.44zM19.04 139.7h4.32v1.3h-4.32zM16.88 141.7h1.44v1.3h-1.44zM19.04 141.7h3.60v1.3h-3.60zM16.88 151.7h1.44v1.3h-1.44zM19.04 151.7h5.04v1.3h-5.04zM16.88 157.7h1.44v1.3h-1.44zM19.04 157.7h5.04v1.3h-5.04zM16.88 163.7h1.44v1.3h-1.44zM19.04 163.7h5.04v1.3h-5.04zM16.88 169.7h1.44v1.3h-1.44zM19.04 169.7h5.04v1.3h-5.04zM16.88 175.7h1.44v1.3h-1.44zM19.04 175.7h5.04v1.3h-5.04zM16.88 181.7h1.44v1.3h-1.44zM19.04 181.7h5.04v1.3h-5.04zM16.88 187.7h1.44v1.3h-1.44zM19.04 187.7h4.32v1.3h-4.32zM18.32 195.7h1.44v1.3h-1.44zM20.48 195.7h4.32v1.3h-4.32zM18.32 197.7h1.44v1.3h-1.44zM20.48 197.7h4.32v1.3h-4.32zM18.32 199.7h1.44v1.3h-1.44zM20.48 199.7h4.32v1.3h-4.32zM17.60 201.7h1.44v1.3h-1.44zM19.76 201.7h4.32v1.3h-4.32zM16.88 203.7h1.44v1.3h-1.44zM19.04 203.7h3.60v1.3h-3.60zM16.88 205.7h1.44v1.3h-1.44zM19.04 205.7h3.60v1.3h-3.60zM16.88 215.7h1.44v1.3h-1.44zM19.04 215.7h5.04v1.3h-5.04zM16.88 221.7h1.44v1.3h-1.44zM19.04 221.7h5.04v1.3h-5.04zM16.88 227.7h1.44v1.3h-1.44zM19.04 227.7h5.04v1.3h-5.04zM16.88 233.7h1.44v1.3h-1.44zM19.04 233.7h5.04v1.3h-5.04zM16.88 239.7h1.44v1.3h-1.44zM19.04 239.7h5.04v1.3h-5.04zM16.88 247.7h1.44v1.3h-1.44zM19.04 247.7h4.32v1.3h-4.32zM18.32 255.7h1.44v1.3h-1.44zM20.48 255.7h4.32v1.3h-4.32zM18.32 257.6h1.44v1.3h-1.44zM20.48 257.6h4.32v1.3h-4.32zM17.60 259.6h1.44v1.3h-1.44zM19.76 259.6h4.32v1.3h-4.32zM16.88 261.6h1.44v1.3h-1.44zM19.04 261.6h3.60v1.3h-3.60zM16.88 271.6h1.44v1.3h-1.44zM19.04 271.6h5.76v1.3h-5.76zM16.88 273.6h1.44v1.3h-1.44zM19.04 273.6h5.04v1.3h-5.04zM16.88 279.6h1.44v1.3h-1.44zM19.04 279.6h4.32v1.3h-4.32zM18.32 287.6h1.44v1.3h-1.44zM20.48 287.6h4.32v1.3h-4.32zM18.32 289.6h1.44v1.3h-1.44zM20.48 289.6h4.32v1.3h-4.32zM18.32 291.6h1.44v1.3h-1.44zM20.48 291.6h4.32v1.3h-4.32zM18.32 293.6h1.44v1.3h-1.44zM20.48 293.6h4.32v1.3h-4.32zM18.32 295.6h1.44v1.3h-1.44zM20.48 295.6h4.32v1.3h-4.32zM17.60 297.6h1.44v1.3h-1.44zM19.76 297.6h4.32v1.3h-4.32zM16.88 299.6h1.44v1.3h-1.44zM19.04 299.6h5.04v1.3h-5.04zM16.88 305.6h1.44v1.3h-1.44zM19.04 305.6h5.04v1.3h-5.04zM16.88 311.6h1.44v1.3h-1.44zM19.04 311.6h5.04v1.3h-5.04zM16.88 317.6h1.44v1.3h-1.44zM19.04 317.6h5.04v1.3h-5.04zM18.32 325.6h1.44v1.3h-1.44zM20.48 325.6h4.32v1.3h-4.32zM18.32 327.6h1.44v1.3h-1.44zM20.48 327.6h5.04v1.3h-5.04zM18.32 333.6h1.44v1.3h-1.44zM20.48 333.6h5.04v1.3h-5.04zM18.32 339.6h1.44v1.3h-1.44zM20.48 339.6h5.04v1.3h-5.04zM17.60 345.6h2.16v1.3h-2.16zM15.44 349.6h1.44v1.3h-1.44zM17.60 349.6h5.04v1.3h-5.04zM15.44 355.6h1.44v1.3h-1.44zM17.60 355.6h5.04v1.3h-5.04zM15.44 361.6h1.44v1.3h-1.44zM17.60 361.6h5.04v1.3h-5.04zM15.44 367.6h1.44v1.3h-1.44zM17.60 367.6h5.04v1.3h-5.04zM15.44 373.6h1.44v1.3h-1.44zM17.60 373.6h5.76v1.3h-5.76zM16.88 375.6h1.44v1.3h-1.44zM19.04 375.6h4.32v1.3h-4.32zM16.88 377.6h1.44v1.3h-1.44zM19.04 377.6h3.60v1.3h-3.60zM16.88 387.6h1.44v1.3h-1.44zM19.04 387.6h3.60v1.3h-3.60zM16.88 389.6h1.44v1.3h-1.44zM19.04 389.6h3.60v1.3h-3.60zM16.88 397.6h1.44v1.3h-1.44zM19.04 397.6h4.32v1.3h-4.32zM18.32 405.6h1.44v1.3h-1.44zM20.48 405.6h4.32v1.3h-4.32zM18.32 407.6h1.44v1.3h-1.44zM20.48 407.6h4.32v1.3h-4.32zM18.32 409.6h1.44v1.3h-1.44zM20.48 409.6h4.32v1.3h-4.32zM17.60 411.6h1.44v1.3h-1.44zM19.76 411.6h4.32v1.3h-4.32zM16.88 413.6h1.44v1.3h-1.44zM19.04 413.6h5.04v1.3h-5.04zM16.88 419.6h1.44v1.3h-1.44zM19.04 419.6h5.04v1.3h-5.04zM16.88 425.6h1.44v1.3h-1.44zM19.04 425.6h5.04v1.3h-5.04zM16.88 431.6h1.44v1.3h-1.44zM19.04 431.6h5.04v1.3h-5.04zM14.72 437.6h2.16v1.3h-2.16zM14.00 439.6h1.44v1.3h-1.44zM16.16 439.6h5.76v1.3h-5.76zM15.44 441.6h1.44v1.3h-1.44zM17.60 441.6h4.32v1.3h-4.32zM16.88 443.6h1.44v1.3h-1.44zM19.04 443.6h3.60v1.3h-3.60zM16.88 451.6h1.44v1.3h-1.44zM19.04 451.6h4.32v1.3h-4.32zM18.32 459.6h1.44v1.3h-1.44zM20.48 459.6h4.32v1.3h-4.32zM18.32 461.6h1.44v1.3h-1.44zM20.48 461.6h4.32v1.3h-4.32zM17.60 463.6h1.44v1.3h-1.44zM19.76 463.6h4.32v1.3h-4.32zM15.44 465.6h1.44v1.3h-1.44zM17.60 465.6h5.04v1.3h-5.04zM15.44 471.6h1.44v1.3h-1.44zM17.60 471.6h5.04v1.3h-5.04zM15.44 477.6h1.44v1.3h-1.44zM17.60 477.6h5.04v1.3h-5.04zM15.44 483.6h1.44v1.3h-1.44zM17.60 483.6h5.04v1.3h-5.04zM15.44 489.6h1.44v1.3h-1.44zM17.60 489.6h5.04v1.3h-5.04zM15.44 495.6h1.44v1.3h-1.44zM17.60 495.6h5.04v1.3h-5.04zM15.44 501.6h1.44v1.3h-1.44zM17.60 501.6h5.04v1.3h-5.04zM15.44 507.6h1.44v1.3h-1.44zM17.60 507.6h5.04v1.3h-5.04zM14.00 515.6h1.44v1.3h-1.44zM16.16 515.6h5.76v1.3h-5.76zM15.44 517.6h1.44v1.3h-1.44zM17.60 517.6h4.32v1.3h-4.32zM16.88 525.6h1.44v1.3h-1.44zM19.04 525.6h4.32v1.3h-4.32zM16.88 527.6h1.44v1.3h-1.44zM19.04 527.6h4.32v1.3h-4.32zM16.88 529.6h1.44v1.3h-1.44zM19.04 529.6h4.32v1.3h-4.32zM16.16 531.6h1.44v1.3h-1.44zM18.32 531.6h4.32v1.3h-4.32zM15.44 533.6h1.44v1.3h-1.44zM17.60 533.6h3.60v1.3h-3.60zM15.44 541.6h1.44v1.3h-1.44zM17.60 541.6h5.04v1.3h-5.04zM15.44 547.6h1.44v1.3h-1.44zM17.60 547.6h5.04v1.3h-5.04zM15.44 553.6h1.44v1.3h-1.44zM17.60 553.6h5.04v1.3h-5.04zM15.44 559.6h1.44v1.3h-1.44zM17.60 559.6h5.04v1.3h-5.04zM14.72 565.6h1.44v1.3h-1.44zM16.88 565.6h5.76v1.3h-5.76zM14.00 569.6h1.44v1.3h-1.44zM16.16 569.6h4.32v1.3h-4.32zM15.44 571.6h1.44v1.3h-1.44zM17.60 571.6h4.32v1.3h-4.32zM39.20 571.6h1.44v1.3h-1.44zM41.36 571.6h4.32v1.3h-4.32zM14.72 573.6h1.44v1.3h-1.44zM16.88 573.6h4.32v1.3h-4.32zM15.44 575.6h1.44v1.3h-1.44zM17.60 575.6h4.32v1.3h-4.32zM16.88 583.6h1.44v1.3h-1.44zM19.04 583.6h4.32v1.3h-4.32zM16.88 585.6h1.44v1.3h-1.44zM19.04 585.6h4.32v1.3h-4.32zM16.88 587.6h1.44v1.3h-1.44zM19.04 587.6h4.32v1.3h-4.32zM16.88 589.6h1.44v1.3h-1.44zM19.04 589.6h4.32v1.3h-4.32zM16.16 591.6h1.44v1.3h-1.44zM18.32 591.6h4.32v1.3h-4.32zM15.44 593.6h1.44v1.3h-1.44zM17.60 593.6h5.04v1.3h-5.04zM15.44 599.6h1.44v1.3h-1.44zM17.60 599.6h5.04v1.3h-5.04zM15.44 605.6h1.44v1.3h-1.44zM17.60 605.6h5.04v1.3h-5.04zM15.44 611.6h1.44v1.3h-1.44zM17.60 611.6h5.04v1.3h-5.04zM15.44 617.6h1.44v1.3h-1.44zM17.60 617.6h5.04v1.3h-5.04zM15.44 623.6h1.44v1.3h-1.44zM17.60 623.6h5.04v1.3h-5.04zM15.44 629.6h1.44v1.3h-1.44zM17.60 629.6h5.04v1.3h-5.04zM15.44 635.6h1.44v1.3h-1.44zM17.60 635.6h5.04v1.3h-5.04zM15.44 641.6h1.44v1.3h-1.44zM17.60 641.6h5.04v1.3h-5.04z"/>
<path fill="#9cdcfe" opacity="0.6" d="M16.16 1.6h5.76v1.3h-5.76zM24.80 1.6h5.04v1.3h-5.04zM31.28 1.6h3.60v1.3h-3.60zM20.48 3.6h3.60v1.3h-3.60zM31.28 3.6h3.60v1.3h-3.60zM54.32 3.6h2.88v1.3h-2.88zM20.48 5.7h3.60v1.3h-3.60zM31.28 5.7h3.60v1.3h-3.60zM54.32 5.7h2.88v1.3h-2.88zM20.48 7.7h3.60v1.3h-3.60zM31.28 7.7h3.60v1.3h-3.60zM54.32 7.7h2.88v1.3h-2.88zM20.48 9.7h3.60v1.3h-3.60zM31.28 9.7h3.60v1.3h-3.60zM54.32 9.7h2.88v1.3h-2.88zM20.48 13.7h2.88v1.3h-2.88zM15.44 15.7h3.60v1.3h-3.60zM35.60 15.7h0.72v1.3h-0.72zM15.44 17.6h2.16v1.3h-2.16zM24.08 21.6h3.60v1.3h-3.60zM34.88 21.6h3.60v1.3h-3.60zM24.08 23.6h3.60v1.3h-3.60zM34.88 23.6h3.60v1.3h-3.60zM24.08 25.6h3.60v1.3h-3.60zM34.88 25.6h3.60v1.3h-3.60zM17.60 33.6h2.88v1.3h-2.88zM17.60 35.6h3.60v1.3h-3.60zM25.52 39.6h3.60v1.3h-3.60zM36.32 39.6h3.60v1.3h-3.60zM25.52 41.6h3.60v1.3h-3.60zM36.32 41.6h3.60v1.3h-3.60zM25.52 43.6h3.60v1.3h-3.60zM36.32 43.6h3.60v1.3h-3.60zM17.60 49.6h2.88v1.3h-2.88zM17.60 51.6h3.60v1.3h-3.60zM17.60 59.6h2.88v1.3h-2.88zM17.60 65.7h2.88v1.3h-2.88zM17.60 71.7h2.88v1.3h-2.88zM17.60 77.7h2.88v1.3h-2.88zM17.60 83.7h2.88v1.3h-2.88zM17.60 91.7h2.88v1.3h-2.88zM17.60 93.7h3.60v1.3h-3.60zM25.52 97.7h3.60v1.3h-3.60zM36.32 97.7h3.60v1.3h-3.60zM25.52 99.7h3.60v1.3h-3.60zM36.32 99.7h3.60v1.3h-3.60zM17.60 105.7h2.88v1.3h-2.88zM17.60 107.7h3.60v1.3h-3.60zM17.60 113.7h2.88v1.3h-2.88zM17.60 119.7h2.88v1.3h-2.88zM17.60 125.7h2.88v1.3h-2.88zM17.60 131.7h2.88v1.3h-2.88zM24.08 137.7h3.60v1.3h-3.60zM24.08 139.7h3.60v1.3h-3.60zM17.60 143.7h2.88v1.3h-2.88zM17.60 145.7h3.60v1.3h-3.60zM17.60 153.7h2.88v1.3h-2.88zM17.60 159.7h2.88v1.3h-2.88zM17.60 165.7h2.88v1.3h-2.88zM17.60 171.7h2.88v1.3h-2.88zM17.60 177.7h2.88v1.3h-2.88zM17.60 183.7h2.88v1.3h-2.88zM17.60 189.7h2.88v1.3h-2.88zM17.60 191.7h3.60v1.3h-3.60zM25.52 195.7h3.60v1.3h-3.60zM36.32 195.7h3.60v1.3h-3.60zM25.52 197.7h3.60v1.3h-3.60zM36.32 197.7h3.60v1.3h-3.60zM25.52 199.7h3.60v1.3h-3.60zM36.32 199.7h3.60v1.3h-3.60zM17.60 207.7h2.88v1.3h-2.88zM17.60 209.7h3.60v1.3h-3.60zM17.60 217.7h2.88v1.3h-2.88zM17.60 223.7h2.88v1.3h-2.88zM17.60 229.7h2.88v1.3h-2.88zM17.60 235.7h2.88v1.3h-2.88zM17.60 241.7h2.88v1.3h-2.88zM17.60 243.7h3.60v1.3h-3.60zM17.60 249.7h2.88v1.3h-2.88zM17.60 251.7h3.60v1.3h-3.60zM25.52 255.7h3.60v1.3h-3.60zM36.32 255.7h3.60v1.3h-3.60zM25.52 257.6h3.60v1.3h-3.60zM36.32 257.6h3.60v1.3h-3.60zM17.60 263.6h2.88v1.3h-2.88zM17.60 265.6h3.60v1.3h-3.60zM25.52 271.6h3.60v1.3h-3.60zM42.08 271.6h0.72v1.3h-0.72zM17.60 275.6h2.88v1.3h-2.88zM17.60 281.6h2.88v1.3h-2.88zM17.60 283.6h3.60v1.3h-3.60zM25.52 287.6h3.60v1.3h-3.60zM36.32 287.6h3.60v1.3h-3.60zM25.52 289.6h3.60v1.3h-3.60zM36.32 289.6h3.60v1.3h-3.60zM25.52 291.6h3.60v1.3h-3.60zM36.32 291.6h3.60v1.3h-3.60zM25.52 293.6h3.60v1.3h-3.60zM36.32 293.6h3.60v1.3h-3.60zM25.52 295.6h3.60v1.3h-3.60zM36.32 295.6h3.60v1.3h-3.60zM17.60 301.6h2.88v1.3h-2.88zM17.60 307.6h2.88v1.3h-2.88zM17.60 313.6h2.88v1.3h-2.88zM17.60 319.6h2.88v1.3h-2.88zM25.52 325.6h0.72v1.3h-0.72zM19.04 329.6h2.88v1.3h-2.88zM19.04 335.6h2.88v1.3h-2.88zM19.04 341.6h2.88v1.3h-2.88zM16.16 351.6h2.88v1.3h-2.88zM16.16 357.6h2.88v1.3h-2.88zM16.16 363.6h2.88v1.3h-2.88zM16.16 369.6h2.88v1.3h-2.88zM24.08 373.6h3.60v1.3h-3.60zM24.08 375.6h3.60v1.3h-3.60zM17.60 379.6h2.88v1.3h-2.88zM17.60 381.6h3.60v1.3h-3.60zM17.60 391.6h2.88v1.3h-2.88zM17.60 393.6h3.60v1.3h-3.60zM17.60 399.6h2.88v1.3h-2.88zM17.60 401.6h3.60v1.3h-3.60zM25.52 405.6h3.60v1.3h-3.60zM36.32 405.6h3.60v1.3h-3.60zM25.52 407.6h3.60v1.3h-3.60zM36.32 407.6h3.60v1.3h-3.60zM25.52 409.6h3.60v1.3h-3.60zM36.32 409.6h3.60v1.3h-3.60zM17.60 415.6h2.88v1.3h-2.88zM17.60 421.6h2.88v1.3h-2.88zM17.60 427.6h2.88v1.3h-2.88zM17.60 433.6h2.88v1.3h-2.88zM22.64 441.6h3.60v1.3h-3.60zM17.60 445.6h2.88v1.3h-2.88zM17.60 447.6h3.60v1.3h-3.60zM17.60 453.6h2.88v1.3h-2.88zM17.60 455.6h3.60v1.3h-3.60zM25.52 459.6h3.60v1.3h-3.60zM36.32 459.6h3.60v1.3h-3.60zM25.52 461.6h3.60v1.3h-3.60zM36.32 461.6h3.60v1.3h-3.60zM16.16 467.6h2.88v1.3h-2.88zM16.16 473.6h2.88v1.3h-2.88zM16.16 479.6h2.88v1.3h-2.88zM16.16 485.6h2.88v1.3h-2.88zM16.16 491.6h2.88v1.3h-2.88zM16.16 497.6h2.88v1.3h-2.88zM16.16 503.6h2.88v1.3h-2.88zM16.16 509.6h2.88v1.3h-2.88zM22.64 515.6h3.60v1.3h-3.60zM16.16 519.6h2.88v1.3h-2.88zM16.16 521.6h3.60v1.3h-3.60zM24.08 525.6h3.60v1.3h-3.60zM34.88 525.6h3.60v1.3h-3.60zM24.08 527.6h3.60v1.3h-3.60zM34.88 527.6h3.60v1.3h-3.60zM24.08 529.6h3.60v1.3h-3.60zM34.88 529.6h3.60v1.3h-3.60zM16.16 535.6h2.88v1.3h-2.88zM16.16 537.6h3.60v1.3h-3.60zM16.16 543.6h2.88v1.3h-2.88zM16.16 549.6h2.88v1.3h-2.88zM16.16 555.6h2.88v1.3h-2.88zM16.16 561.6h2.88v1.3h-2.88zM22.64 571.6h2.88v1.3h-2.88zM16.16 577.6h2.88v1.3h-2.88zM16.16 579.6h3.60v1.3h-3.60zM24.08 583.6h3.60v1.3h-3.60zM34.88 583.6h3.60v1.3h-3.60zM24.08 585.6h3.60v1.3h-3.60zM34.88 585.6h3.60v1.3h-3.60zM24.08 587.6h3.60v1.3h-3.60zM34.88 587.6h3.60v1.3h-3.60zM24.08 589.6h3.60v1.3h-3.60zM34.88 589.6h3.60v1.3h-3.60zM16.16 595.6h2.88v1.3h-2.88zM16.16 601.6h2.88v1.3h-2.88zM16.16 607.6h2.88v1.3h-2.88zM16.16 613.6h2.88v1.3h-2.88zM16.16 619.6h2.88v1.3h-2.88zM16.16 625.6h2.88v1.3h-2.88zM16.16 631.6h2.88v1.3h-2.88zM16.16 637.6h2.88v1.3h-2.88zM16.16 643.6h2.88v1.3h-2.88z"/>
<path fill="#ce9178" opacity="0.6" d="M24.80 3.6h5.76v1.3h-5.76zM35.60 3.6h7.92v1.3h-7.92zM24.80 5.7h5.76v1.3h-5.76zM35.60 5.7h7.92v1.3h-7.92zM24.80 7.7h5.76v1.3h-5.76zM35.60 7.7h7.92v1.3h-7.92zM24.80 9.7h5.76v1.3h-5.76zM35.60 9.7h7.92v1.3h-7.92zM24.08 13.7h4.32v1.3h-4.32zM29.12 13.7h2.88v1.3h-2.88zM32.72 13.7h2.16v1.3h-2.16zM19.76 15.7h7.20v1.3h-7.20zM27.68 15.7h0.72v1.3h-0.72zM29.12 15.7h5.76v1.3h-5.76zM37.04 15.7h2.16v1.3h-2.16zM18.32 17.6h7.20v1.3h-7.20zM26.24 17.6h5.04v1.3h-5.04zM32.00 17.6h2.16v1.3h-2.16zM34.88 17.6h1.44v1.3h-1.44zM28.40 21.6h5.76v1.3h-5.76zM39.20 21.6h6.48v1.3h-6.48zM46.40 21.6h2.88v1.3h-2.88zM50.00 21.6h1.44v1.3h-1.44zM28.40 23.6h5.76v1.3h-5.76zM39.20 23.6h6.48v1.3h-6.48zM46.40 23.6h2.88v1.3h-2.88zM50.00 23.6h1.44v1.3h-1.44zM28.40 25.6h5.76v1.3h-5.76zM39.20 25.6h6.48v1.3h-6.48zM46.40 25.6h2.88v1.3h-2.88zM50.00 25.6h1.44v1.3h-1.44zM21.20 33.6h4.32v1.3h-4.32zM26.24 33.6h2.88v1.3h-2.88zM29.84 33.6h1.44v1.3h-1.44zM32.00 33.6h5.76v1.3h-5.76zM38.48 33.6h7.20v1.3h-7.20zM46.40 33.6h5.04v1.3h-5.04zM52.16 33.6h2.88v1.3h-2.88zM55.76 33.6h6.48v1.3h-6.48zM62.96 33.6h9.36v1.3h-9.36zM73.04 33.6h2.16v1.3h-2.16zM75.92 33.6h3.60v1.3h-3.60zM80.24 33.6h0.72v1.3h-0.72zM81.68 33.6h5.76v1.3h-5.76zM88.16 33.6h1.44v1.3h-1.44zM90.32 33.6h2.16v1.3h-2.16zM93.20 33.6h5.76v1.3h-5.76zM99.68 33.6h1.44v1.3h-1.44zM101.84 33.6h4.32v1.3h-4.32zM21.92 35.6h6.48v1.3h-6.48zM29.12 35.6h1.44v1.3h-1.44zM31.28 35.6h2.16v1.3h-2.16zM34.16 35.6h5.76v1.3h-5.76zM40.64 35.6h1.44v1.3h-1.44zM42.80 35.6h4.32v1.3h-4.32zM29.84 39.6h5.76v1.3h-5.76zM40.64 39.6h6.48v1.3h-6.48zM29.84 41.6h5.76v1.3h-5.76zM40.64 41.6h5.76v1.3h-5.76zM29.84 43.6h5.76v1.3h-5.76zM40.64 43.6h6.48v1.3h-6.48zM21.20 49.6h4.32v1.3h-4.32zM26.24 49.6h2.88v1.3h-2.88zM29.84 49.6h1.44v1.3h-1.44zM32.00 49.6h5.76v1.3h-5.76zM38.48 49.6h7.20v1.3h-7.20zM46.40 49.6h5.04v1.3h-5.04zM52.16 49.6h2.88v1.3h-2.88zM55.76 49.6h6.48v1.3h-6.48zM62.96 49.6h9.36v1.3h-9.36zM73.04 49.6h2.16v1.3h-2.16zM75.92 49.6h3.60v1.3h-3.60zM80.24 49.6h0.72v1.3h-0.72zM81.68 49.6h5.76v1.3h-5.76zM88.16 49.6h5.04v1.3h-5.04zM93.92 49.6h2.88v1.3h-2.88zM97.52 49.6h0.72v1.3h-0.72zM98.96 49.6h5.04v1.3h-5.04zM104.72 49.6h1.44v1.3h-1.44zM106.88 49.6h2.88v1.3h-2.88zM110.48 49.6h3.60v1.3h-3.60zM21.92 51.6h5.76v1.3h-5.76zM28.40 51.6h1.44v1.3h-1.44zM30.56 51.6h2.88v1.3h-2.88zM34.16 51.6h3.60v1.3h-3.60zM21.20 59.6h4.32v1.3h-4.32zM26.24 59.6h2.88v1.3h-2.88zM29.84 59.6h1.44v1.3h-1.44zM32.00 59.6h5.76v1.3h-5.76zM38.48 59.6h7.20v1.3h-7.20zM46.40 59.6h5.04v1.3h-5.04zM52.16 59.6h2.88v1.3h-2.88zM55.76 59.6h6.48v1.3h-6.48zM62.96 59.6h9.36v1.3h-9.36zM73.04 59.6h2.16v1.3h-2.16zM75.92 59.6h3.60v1.3h-3.60zM80.24 59.6h0.72v1.3h-0.72zM81.68 59.6h3.60v1.3h-3.60zM21.20 65.7h4.32v1.3h-4.32zM26.24 65.7h2.88v1.3h-2.88zM29.84 65.7h1.44v1.3h-1.44zM32.00 65.7h5.76v1.3h-5.76zM38.48 65.7h7.20v1.3h-7.20zM46.40 65.7h5.04v1.3h-5.04zM52.16 65.7h2.88v1.3h-2.88zM55.76 65.7h6.48v1.3h-6.48zM62.96 65.7h9.36v1.3h-9.36zM73.04 65.7h6.48v1.3h-6.48zM21.20 71.7h4.32v1.3h-4.32zM26.24 71.7h2.88v1.3h-2.88zM29.84 71.7h1.44v1.3h-1.44zM32.00 71.7h5.76v1.3h-5.76zM38.48 71.7h7.20v1.3h-7.20zM46.40 71.7h5.04v1.3h-5.04zM52.16 71.7h2.88v1.3h-2.88zM55.76 71.7h6.48v1.3h-6.48zM62.96 71.7h9.36v1.3h-9.36zM73.04 71.7h6.48v1.3h-6.48zM21.20 77.7h4.32v1.3h-4.32zM26.24 77.7h2.88v1.3h-2.88zM29.84 77.7h1.44v1.3h-1.44zM32.00 77.7h5.76v1.3h-5.76zM38.48 77.7h7.20v1.3h-7.20zM46.40 77.7h5.04v1.3h-5.04zM52.16 77.7h2.88v1.3h-2.88zM55.76 77.7h6.48v1.3h-6.48zM62.96 77.7h9.36v1.3h-9.36zM73.04 77.7h5.76v1.3h-5.76zM21.20 83.7h4.32v1.3h-4.32zM26.24 83.7h2.88v1.3h-2.88zM29.84 83.7h1.44v1.3h-1.44zM32.00 83.7h5.76v1.3h-5.76zM38.48 83.7h7.20v1.3h-7.20zM46.40 83.7h5.04v1.3h-5.04zM52.16 83.7h2.88v1.3h-2.88zM55.76 83.7h6.48v1.3h-6.48zM62.96 83.7h9.36v1.3h-9.36zM73.04 83.7h2.16v1.3h-2.16zM75.92 83.7h3.60v1.3h-3.60zM80.24 83.7h0.72v1.3h-0.72zM81.68 83.7h3.60v1.3h-3.60zM86.00 83.7h5.04v1.3h-5.04zM91.76 83.7h5.04v1.3h-5.04zM97.52 83.7h2.88v1.3h-2.88zM101.12 83.7h2.88v1.3h-2.88zM21.20 91.7h4.32v1.3h-4.32zM26.24 91.7h2.88v1.3h-2.88zM29.84 91.7h1.44v1.3h-1.44zM32.00 91.7h5.76v1.3h-5.76zM38.48 91.7h7.20v1.3h-7.20zM46.40 91.7h5.04v1.3h-5.04zM52.16 91.7h2.88v1.3h-2.88zM55.76 91.7h6.48v1.3h-6.48zM62.96 91.7h9.36v1.3h-9.36zM73.04 91.7h2.16v1.3h-2.16zM75.92 91.7h3.60v1.3h-3.60zM80.24 91.7h0.72v1.3h-0.72zM81.68 91.7h5.76v1.3h-5.76zM88.16 91.7h5.04v1.3h-5.04zM93.92 91.7h2.88v1.3h-2.88zM97.52 91.7h0.72v1.3h-0.72zM98.96 91.7h5.76v1.3h-5.76zM105.44 91.7h1.44v1.3h-1.44zM107.60 91.7h5.04v1.3h-5.04zM113.36 91.7h1.44v1.3h-1.44zM115.52 91.7h2.88v1.3h-2.88zM21.92 93.7h7.20v1.3h-7.20zM29.84 97.7h5.76v1.3h-5.76zM40.64 97.7h6.48v1.3h-6.48zM29.84 99.7h5.76v1.3h-5.76zM40.64 99.7h5.76v1.3h-5.76zM21.20 105.7h4.32v1.3h-4.32zM26.24 105.7h2.88v1.3h-2.88zM29.84 105.7h1.44v1.3h-1.44zM32.00 105.7h5.76v1.3h-5.76zM38.48 105.7h7.20v1.3h-7.20zM46.40 105.7h5.04v1.3h-5.04zM52.16 105.7h2.88v1.3h-2.88zM55.76 105.7h6.48v1.3h-6.48zM62.96 105.7h9.36v1.3h-9.36zM73.04 105.7h2.16v1.3h-2.16zM75.92 105.7h3.60v1.3h-3.60zM80.24 105.7h0.72v1.3h-0.72zM81.68 105.7h5.76v1.3h-5.76zM88.16 105.7h5.04v1.3h-5.04zM93.92 105.7h2.88v1.3h-2.88zM97.52 105.7h0.72v1.3h-0.72zM98.96 105.7h3.60v1.3h-3.60zM103.28 105.7h5.04v1.3h-5.04zM109.04 105.7h0.72v1.3h-0.72zM21.92 107.7h5.04v1.3h-5.04zM21.20 113.7h4.32v1.3h-4.32zM26.24 113.7h2.88v1.3h-2.88zM29.84 113.7h1.44v1.3h-1.44zM32.00 113.7h5.76v1.3h-5.76zM38.48 113.7h7.20v1.3h-7.20zM46.40 113.7h5.04v1.3h-5.04zM52.16 113.7h2.88v1.3h-2.88zM55.76 113.7h6.48v1.3h-6.48zM62.96 113.7h9.36v1.3h-9.36zM73.04 113.7h2.88v1.3h-2.88zM76.64 113.7h5.04v1.3h-5.04zM82.40 113.7h2.88v1.3h-2.88zM86.00 113.7h6.48v1.3h-6.48zM93.20 113.7h9.36v1.3h-9.36zM103.28 113.7h2.16v1.3h-2.16zM106.16 113.7h3.60v1.3h-3.60zM110.48 113.7h0.72v1.3h-0.72zM111.92 113.7h5.04v1.3h-5.04zM21.20 119.7h4.32v1.3h-4.32zM26.24 119.7h2.88v1.3h-2.88zM29.84 119.7h1.44v1.3h-1.44zM32.00 119.7h5.76v1.3h-5.76zM38.48 119.7h7.20v1.3h-7.20zM46.40 119.7h5.04v1.3h-5.04zM52.16 119.7h2.88v1.3h-2.88zM55.76 119.7h6.48v1.3h-6.48zM62.96 119.7h9.36v1.3h-9.36zM73.04 119.7h5.76v1.3h-5.76zM79.52 119.7h5.04v1.3h-5.04zM85.28 119.7h2.88v1.3h-2.88zM88.88 119.7h3.60v1.3h-3.60zM21.20 125.7h4.32v1.3h-4.32zM26.24 125.7h2.88v1.3h-2.88zM29.84 125.7h1.44v1.3h-1.44zM32.00 125.7h5.76v1.3h-5.76zM38.48 125.7h7.20v1.3h-7.20zM46.40 125.7h5.04v1.3h-5.04zM52.16 125.7h2.88v1.3h-2.88zM55.76 125.7h6.48v1.3h-6.48zM62.96 125.7h9.36v1.3h-9.36zM73.04 125.7h5.76v1.3h-5.76zM79.52 125.7h5.04v1.3h-5.04zM85.28 125.7h2.88v1.3h-2.88zM88.88 125.7h3.60v1.3h-3.60zM21.20 131.7h4.32v1.3h-4.32zM26.24 131.7h2.88v1.3h-2.88zM29.84 131.7h1.44v1.3h-1.44zM32.00 131.7h5.76v1.3h-5.76zM38.48 131.7h7.20v1.3h-7.20zM46.40 131.7h5.04v1.3h-5.04zM52.16 131.7h2.88v1.3h-2.88zM55.76 131.7h6.48v1.3h-6.48zM62.96 131.7h9.36v1.3h-9.36zM73.04 131.7h5.04v1.3h-5.04zM78.80 131.7h5.04v1.3h-5.04zM84.56 131.7h2.88v1.3h-2.88zM88.16 131.7h6.48v1.3h-6.48zM95.36 131.7h9.36v1.3h-9.36zM105.44 131.7h2.16v1.3h-2.16zM108.32 131.7h3.60v1.3h-3.60zM112.64 131.7h0.72v1.3h-0.72zM114.08 131.7h4.52v1.3h-4.52zM28.40 137.7h5.76v1.3h-5.76zM34.88 137.7h2.88v1.3h-2.88zM38.48 137.7h6.48v1.3h-6.48zM45.68 137.7h3.60v1.3h-3.60zM28.40 139.7h6.48v1.3h-6.48zM21.20 143.7h4.32v1.3h-4.32zM26.24 143.7h2.88v1.3h-2.88zM29.84 143.7h1.44v1.3h-1.44zM32.00 143.7h5.76v1.3h-5.76zM38.48 143.7h7.20v1.3h-7.20zM46.40 143.7h5.04v1.3h-5.04zM52.16 143.7h2.16v1.3h-2.16zM55.04 143.7h3.60v1.3h-3.60zM59.36 143.7h0.72v1.3h-0.72zM60.80 143.7h5.04v1.3h-5.04zM66.56 143.7h2.88v1.3h-2.88zM70.16 143.7h6.48v1.3h-6.48zM77.36 143.7h2.88v1.3h-2.88zM80.96 143.7h0.72v1.3h-0.72zM82.40 143.7h5.04v1.3h-5.04zM88.16 143.7h5.04v1.3h-5.04zM93.92 143.7h2.88v1.3h-2.88zM97.52 143.7h6.48v1.3h-6.48zM104.72 143.7h9.36v1.3h-9.36zM114.80 143.7h2.16v1.3h-2.16zM21.92 145.7h6.48v1.3h-6.48zM21.20 153.7h4.32v1.3h-4.32zM26.24 153.7h2.88v1.3h-2.88zM29.84 153.7h1.44v1.3h-1.44zM32.00 153.7h5.76v1.3h-5.76zM38.48 153.7h7.20v1.3h-7.20zM46.40 153.7h5.04v1.3h-5.04zM52.16 153.7h2.16v1.3h-2.16zM55.04 153.7h3.60v1.3h-3.60zM59.36 153.7h0.72v1.3h-0.72zM60.80 153.7h2.88v1.3h-2.88zM64.40 153.7h5.04v1.3h-5.04zM70.16 153.7h2.88v1.3h-2.88zM73.76 153.7h6.48v1.3h-6.48zM80.96 153.7h9.36v1.3h-9.36zM91.04 153.7h1.44v1.3h-1.44zM21.20 159.7h4.32v1.3h-4.32zM26.24 159.7h2.88v1.3h-2.88zM29.84 159.7h1.44v1.3h-1.44zM32.00 159.7h5.76v1.3h-5.76zM38.48 159.7h7.20v1.3h-7.20zM46.40 159.7h5.04v1.3h-5.04zM52.16 159.7h5.76v1.3h-5.76zM58.64 159.7h5.04v1.3h-5.04zM64.40 159.7h2.88v1.3h-2.88zM68.00 159.7h6.48v1.3h-6.48zM75.20 159.7h9.36v1.3h-9.36zM85.28 159.7h2.16v1.3h-2.16zM88.16 159.7h3.60v1.3h-3.60zM92.48 159.7h0.72v1.3h-0.72zM93.92 159.7h5.76v1.3h-5.76zM100.40 159.7h3.60v1.3h-3.60zM21.20 165.7h4.32v1.3h-4.32zM26.24 165.7h2.88v1.3h-2.88zM29.84 165.7h1.44v1.3h-1.44zM32.00 165.7h5.76v1.3h-5.76zM38.48 165.7h7.20v1.3h-7.20zM46.40 165.7h5.04v1.3h-5.04zM52.16 165.7h5.76v1.3h-5.76zM58.64 165.7h5.04v1.3h-5.04zM64.40 165.7h2.88v1.3h-2.88zM68.00 165.7h6.48v1.3h-6.48zM75.20 165.7h9.36v1.3h-9.36zM85.28 165.7h2.16v1.3h-2.16zM88.16 165.7h3.60v1.3h-3.60zM92.48 165.7h0.72v1.3h-0.72zM93.92 165.7h5.76v1.3h-5.76zM100.40 165.7h5.04v1.3h-5.04zM106.16 165.7h2.88v1.3h-2.88zM109.76 165.7h0.72v1.3h-0.72zM111.20 165.7h1.44v1.3h-1.44zM21.20 171.7h4.32v1.3h-4.32zM26.24 171.7h2.88v1.3h-2.88zM29.84 171.7h1.44v1.3h-1.44zM32.00 171.7h5.76v1.3h-5.76zM38.48 171.7h7.20v1.3h-7.20zM46.40 171.7h5.04v1.3h-5.04zM52.16 171.7h5.04v1.3h-5.04zM57.92 171.7h5.04v1.3h-5.04zM63.68 171.7h2.88v1.3h-2.88zM67.28 171.7h6.48v1.3h-6.48zM74.48 171.7h9.36v1.3h-9.36zM84.56 171.7h2.16v1.3h-2.16zM87.44 171.7h3.60v1.3h-3.60zM91.76 171.7h0.72v1.3h-0.72zM21.20 177.7h4.32v1.3h-4.32zM26.24 177.7h2.88v1.3h-2.88zM29.84 177.7h1.44v1.3h-1.44zM32.00 177.7h5.76v1.3h-5.76zM38.48 177.7h7.20v1.3h-7.20zM46.40 177.7h5.76v1.3h-5.76zM52.88 177.7h2.16v1.3h-2.16zM55.76 177.7h3.60v1.3h-3.60zM60.08 177.7h0.72v1.3h-0.72zM61.52 177.7h5.04v1.3h-5.04zM67.28 177.7h1.44v1.3h-1.44zM69.44 177.7h5.76v1.3h-5.76zM75.92 177.7h0.72v1.3h-0.72zM77.36 177.7h0.72v1.3h-0.72zM78.80 177.7h5.04v1.3h-5.04zM84.56 177.7h2.88v1.3h-2.88zM88.16 177.7h6.48v1.3h-6.48zM95.36 177.7h9.36v1.3h-9.36zM105.44 177.7h2.16v1.3h-2.16zM108.32 177.7h4.32v1.3h-4.32zM21.20 183.7h4.32v1.3h-4.32zM26.24 183.7h2.88v1.3h-2.88zM29.84 183.7h1.44v1.3h-1.44zM32.00 183.7h5.76v1.3h-5.76zM38.48 183.7h7.20v1.3h-7.20zM46.40 183.7h5.76v1.3h-5.76zM52.88 183.7h2.16v1.3h-2.16zM55.76 183.7h3.60v1.3h-3.60zM60.08 183.7h0.72v1.3h-0.72zM61.52 183.7h5.04v1.3h-5.04zM67.28 183.7h1.44v1.3h-1.44zM69.44 183.7h5.76v1.3h-5.76zM75.92 183.7h0.72v1.3h-0.72zM77.36 183.7h1.44v1.3h-1.44zM79.52 183.7h5.04v1.3h-5.04zM85.28 183.7h2.88v1.3h-2.88zM88.88 183.7h6.48v1.3h-6.48zM96.08 183.7h2.16v1.3h-2.16zM21.20 189.7h4.32v1.3h-4.32zM26.24 189.7h2.88v1.3h-2.88zM29.84 189.7h1.44v1.3h-1.44zM32.00 189.7h5.76v1.3h-5.76zM38.48 189.7h7.20v1.3h-7.20zM46.40 189.7h5.76v1.3h-5.76zM52.88 189.7h0.72v1.3h-0.72zM54.32 189.7h5.04v1.3h-5.04zM60.08 189.7h2.88v1.3h-2.88zM63.68 189.7h6.48v1.3h-6.48zM70.88 189.7h9.36v1.3h-9.36zM80.96 189.7h2.16v1.3h-2.16zM83.84 189.7h3.60v1.3h-3.60zM88.16 189.7h0.72v1.3h-0.72zM89.60 189.7h1.44v1.3h-1.44zM21.92 191.7h7.20v1.3h-7.20zM29.84 195.7h5.76v1.3h-5.76zM40.64 195.7h6.48v1.3h-6.48zM29.84 197.7h5.76v1.3h-5.76zM40.64 197.7h5.76v1.3h-5.76zM29.84 199.7h5.76v1.3h-5.76zM40.64 199.7h6.48v1.3h-6.48zM21.20 207.7h4.32v1.3h-4.32zM26.24 207.7h2.88v1.3h-2.88zM29.84 207.7h1.44v1.3h-1.44zM32.00 207.7h5.76v1.3h-5.76zM38.48 207.7h7.20v1.3h-7.20zM46.40 207.7h5.76v1.3h-5.76zM52.88 207.7h2.16v1.3h-2.16zM55.76 207.7h3.60v1.3h-3.60zM60.08 207.7h0.72v1.3h-0.72zM61.52 207.7h2.88v1.3h-2.88zM65.12 207.7h1.44v1.3h-1.44zM67.28 207.7h5.76v1.3h-5.76zM73.76 207.7h5.04v1.3h-5.04zM79.52 207.7h2.88v1.3h-2.88zM83.12 207.7h6.48v1.3h-6.48zM90.32 207.7h9.36v1.3h-9.36zM100.40 207.7h2.16v1.3h-2.16zM21.92 209.7h4.32v1.3h-4.32zM21.20 217.7h4.32v1.3h-4.32zM26.24 217.7h2.88v1.3h-2.88zM29.84 217.7h1.44v1.3h-1.44zM32.00 217.7h5.76v1.3h-5.76zM38.48 217.7h7.20v1.3h-7.20zM46.40 217.7h5.76v1.3h-5.76zM52.88 217.7h2.16v1.3h-2.16zM55.76 217.7h3.60v1.3h-3.60zM60.08 217.7h0.72v1.3h-0.72zM61.52 217.7h2.88v1.3h-2.88zM65.12 217.7h5.04v1.3h-5.04zM70.88 217.7h2.88v1.3h-2.88zM74.48 217.7h6.48v1.3h-6.48zM81.68 217.7h9.36v1.3h-9.36zM91.76 217.7h2.16v1.3h-2.16zM94.64 217.7h3.60v1.3h-3.60zM98.96 217.7h0.72v1.3h-0.72zM100.40 217.7h5.76v1.3h-5.76zM106.88 217.7h1.44v1.3h-1.44zM21.20 223.7h4.32v1.3h-4.32zM26.24 223.7h2.88v1.3h-2.88zM29.84 223.7h1.44v1.3h-1.44zM32.00 223.7h5.76v1.3h-5.76zM38.48 223.7h7.20v1.3h-7.20zM46.40 223.7h5.76v1.3h-5.76zM52.88 223.7h5.76v1.3h-5.76zM59.36 223.7h5.04v1.3h-5.04zM65.12 223.7h2.88v1.3h-2.88zM68.72 223.7h6.48v1.3h-6.48zM75.92 223.7h9.36v1.3h-9.36zM86.00 223.7h2.16v1.3h-2.16zM88.88 223.7h3.60v1.3h-3.60zM93.20 223.7h0.72v1.3h-0.72zM94.64 223.7h5.76v1.3h-5.76zM101.12 223.7h5.04v1.3h-5.04zM106.88 223.7h1.44v1.3h-1.44zM21.20 229.7h4.32v1.3h-4.32zM26.24 229.7h2.88v1.3h-2.88zM29.84 229.7h1.44v1.3h-1.44zM32.00 229.7h5.76v1.3h-5.76zM38.48 229.7h7.20v1.3h-7.20zM46.40 229.7h5.76v1.3h-5.76zM52.88 229.7h5.76v1.3h-5.76zM59.36 229.7h5.04v1.3h-5.04zM65.12 229.7h2.88v1.3h-2.88zM68.72 229.7h6.48v1.3h-6.48zM75.92 229.7h9.36v1.3h-9.36zM86.00 229.7h2.16v1.3h-2.16zM88.88 229.7h3.60v1.3h-3.60zM21.20 235.7h4.32v1.3h-4.32zM26.24 235.7h2.88v1.3h-2.88zM29.84 235.7h1.44v1.3h-1.44zM32.00 235.7h5.76v1.3h-5.76zM38.48 235.7h7.20v1.3h-7.20zM46.40 235.7h5.76v1.3h-5.76zM52.88 235.7h5.04v1.3h-5.04zM58.64 235.7h5.04v1.3h-5.04zM64.40 235.7h2.88v1.3h-2.88zM68.00 235.7h6.48v1.3h-6.48zM75.20 235.7h9.36v1.3h-9.36zM85.28 235.7h2.16v1.3h-2.16zM88.16 235.7h3.60v1.3h-3.60zM92.48 235.7h0.72v1.3h-0.72zM93.92 235.7h4.32v1.3h-4.32zM21.20 241.7h4.32v1.3h-4.32zM26.24 241.7h2.88v1.3h-2.88zM29.84 241.7h1.44v1.3h-1.44zM32.00 241.7h5.76v1.3h-5.76zM38.48 241.7h7.20v1.3h-7.20zM46.40 241.7h4.32v1.3h-4.32zM51.44 241.7h2.16v1.3h-2.16zM54.32 241.7h3.60v1.3h-3.60zM58.64 241.7h0.72v1.3h-0.72zM60.08 241.7h1.44v1.3h-1.44zM21.92 243.7h5.04v1.3h-5.04zM21.20 249.7h4.32v1.3h-4.32zM26.24 249.7h2.88v1.3h-2.88zM29.84 249.7h1.44v1.3h-1.44zM32.00 249.7h5.76v1.3h-5.76zM38.48 249.7h7.20v1.3h-7.20zM46.40 249.7h4.32v1.3h-4.32zM51.44 249.7h2.16v1.3h-2.16zM54.32 249.7h3.60v1.3h-3.60zM58.64 249.7h0.72v1.3h-0.72zM60.08 249.7h4.32v1.3h-4.32zM65.12 249.7h5.04v1.3h-5.04zM70.88 249.7h2.88v1.3h-2.88zM74.48 249.7h6.48v1.3h-6.48zM81.68 249.7h9.36v1.3h-9.36zM91.76 249.7h2.16v1.3h-2.16zM94.64 249.7h3.60v1.3h-3.60zM98.96 249.7h0.72v1.3h-0.72zM100.40 249.7h1.44v1.3h-1.44zM21.92 251.7h5.76v1.3h-5.76zM29.84 255.7h5.76v1.3h-5.76zM40.64 255.7h6.48v1.3h-6.48zM29.84 257.6h5.76v1.3h-5.76zM40.64 257.6h5.76v1.3h-5.76zM21.20 263.6h4.32v1.3h-4.32zM26.24 263.6h2.88v1.3h-2.88zM29.84 263.6h1.44v1.3h-1.44zM32.00 263.6h5.76v1.3h-5.76zM38.48 263.6h7.20v1.3h-7.20zM46.40 263.6h4.32v1.3h-4.32zM51.44 263.6h2.16v1.3h-2.16zM54.32 263.6h3.60v1.3h-3.60zM58.64 263.6h0.72v1.3h-0.72zM60.08 263.6h5.04v1.3h-5.04zM65.84 263.6h5.04v1.3h-5.04zM71.60 263.6h2.88v1.3h-2.88zM75.20 263.6h6.48v1.3h-6.48zM82.40 263.6h9.36v1.3h-9.36zM92.48 263.6h2.16v1.3h-2.16zM95.36 263.6h3.60v1.3h-3.60zM99.68 263.6h0.72v1.3h-0.72zM101.12 263.6h1.44v1.3h-1.44zM21.92 265.6h6.48v1.3h-6.48zM29.84 271.6h5.04v1.3h-5.04zM35.60 271.6h5.76v1.3h-5.76zM21.20 275.6h4.32v1.3h-4.32zM26.24 275.6h2.88v1.3h-2.88zM29.84 275.6h1.44v1.3h-1.44zM32.00 275.6h5.76v1.3h-5.76zM38.48 275.6h7.20v1.3h-7.20zM46.40 275.6h4.32v1.3h-4.32zM51.44 275.6h0.72v1.3h-0.72zM52.88 275.6h5.04v1.3h-5.04zM58.64 275.6h2.88v1.3h-2.88zM62.24 275.6h6.48v1.3h-6.48zM69.44 275.6h9.36v1.3h-9.36zM79.52 275.6h2.16v1.3h-2.16zM82.40 275.6h3.60v1.3h-3.60zM86.72 275.6h0.72v1.3h-0.72zM88.16 275.6h5.76v1.3h-5.76zM94.64 275.6h5.04v1.3h-5.04zM100.40 275.6h2.88v1.3h-2.88zM104.00 275.6h0.72v1.3h-0.72zM105.44 275.6h2.88v1.3h-2.88zM21.20 281.6h4.32v1.3h-4.32zM26.24 281.6h2.88v1.3h-2.88zM29.84 281.6h1.44v1.3h-1.44zM32.00 281.6h5.76v1.3h-5.76zM38.48 281.6h7.20v1.3h-7.20zM46.40 281.6h4.32v1.3h-4.32zM51.44 281.6h2.16v1.3h-2.16zM54.32 281.6h3.60v1.3h-3.60zM58.64 281.6h0.72v1.3h-0.72zM60.08 281.6h5.76v1.3h-5.76zM66.56 281.6h5.04v1.3h-5.04zM72.32 281.6h2.88v1.3h-2.88zM75.92 281.6h6.48v1.3h-6.48zM83.12 281.6h9.36v1.3h-9.36zM93.20 281.6h2.16v1.3h-2.16zM96.08 281.6h3.60v1.3h-3.60zM100.40 281.6h0.72v1.3h-0.72zM101.84 281.6h0.72v1.3h-0.72zM21.92 283.6h7.92v1.3h-7.92zM29.84 287.6h5.76v1.3h-5.76zM40.64 287.6h6.48v1.3h-6.48zM29.84 289.6h5.76v1.3h-5.76zM40.64 289.6h5.76v1.3h-5.76zM29.84 291.6h5.76v1.3h-5.76zM40.64 291.6h6.48v1.3h-6.48zM29.84 293.6h5.76v1.3h-5.76zM40.64 293.6h10.80v1.3h-10.80zM29.84 295.6h5.76v1.3h-5.76zM40.64 295.6h5.04v1.3h-5.04zM21.20 301.6h4.32v1.3h-4.32zM26.24 301.6h2.88v1.3h-2.88zM29.84 301.6h1.44v1.3h-1.44zM32.00 301.6h5.76v1.3h-5.76zM38.48 301.6h7.20v1.3h-7.20zM46.40 301.6h4.32v1.3h-4.32zM51.44 301.6h2.16v1.3h-2.16zM54.32 301.6h3.60v1.3h-3.60zM58.64 301.6h0.72v1.3h-0.72zM60.08 301.6h2.88v1.3h-2.88zM63.68 301.6h5.04v1.3h-5.04zM69.44 301.6h2.88v1.3h-2.88zM73.04 301.6h6.48v1.3h-6.48zM80.24 301.6h9.36v1.3h-9.36zM90.32 301.6h2.16v1.3h-2.16zM93.20 301.6h3.60v1.3h-3.60zM97.52 301.6h0.72v1.3h-0.72zM98.96 301.6h5.76v1.3h-5.76zM105.44 301.6h5.04v1.3h-5.04zM111.20 301.6h2.88v1.3h-2.88zM114.80 301.6h0.72v1.3h-0.72zM116.24 301.6h2.36v1.3h-2.36zM21.20 307.6h4.32v1.3h-4.32zM26.24 307.6h2.88v1.3h-2.88zM29.84 307.6h1.44v1.3h-1.44zM32.00 307.6h5.76v1.3h-5.76zM38.48 307.6h7.20v1.3h-7.20zM46.40 307.6h4.32v1.3h-4.32zM51.44 307.6h5.76v1.3h-5.76zM57.92 307.6h5.04v1.3h-5.04zM63.68 307.6h2.88v1.3h-2.88zM67.28 307.6h6.48v1.3h-6.48zM74.48 307.6h9.36v1.3h-9.36zM84.56 307.6h2.16v1.3h-2.16zM87.44 307.6h3.60v1.3h-3.60zM91.76 307.6h0.72v1.3h-0.72zM93.20 307.6h5.76v1.3h-5.76zM99.68 307.6h5.04v1.3h-5.04zM105.44 307.6h2.88v1.3h-2.88zM109.04 307.6h0.72v1.3h-0.72zM110.48 307.6h2.16v1.3h-2.16zM21.20 313.6h4.32v1.3h-4.32zM26.24 313.6h2.88v1.3h-2.88zM29.84 313.6h1.44v1.3h-1.44zM32.00 313.6h5.76v1.3h-5.76zM38.48 313.6h7.20v1.3h-7.20zM46.40 313.6h4.32v1.3h-4.32zM51.44 313.6h5.76v1.3h-5.76zM57.92 313.6h5.04v1.3h-5.04zM63.68 313.6h2.88v1.3h-2.88zM67.28 313.6h6.48v1.3h-6.48zM74.48 313.6h9.36v1.3h-9.36zM84.56 313.6h2.16v1.3h-2.16zM87.44 313.6h3.60v1.3h-3.60zM91.76 313.6h0.72v1.3h-0.72zM21.20 319.6h4.32v1.3h-4.32zM26.24 319.6h2.88v1.3h-2.88zM29.84 319.6h1.44v1.3h-1.44zM32.00 319.6h5.76v1.3h-5.76zM38.48 319.6h7.20v1.3h-7.20zM46.40 319.6h4.32v1.3h-4.32zM51.44 319.6h5.04v1.3h-5.04zM57.20 319.6h5.04v1.3h-5.04zM62.96 319.6h2.88v1.3h-2.88zM66.56 319.6h6.48v1.3h-6.48zM73.76 319.6h9.36v1.3h-9.36zM83.84 319.6h2.16v1.3h-2.16zM86.72 319.6h3.60v1.3h-3.60zM91.04 319.6h0.72v1.3h-0.72zM92.48 319.6h5.76v1.3h-5.76zM22.64 329.6h4.32v1.3h-4.32zM27.68 329.6h2.88v1.3h-2.88zM31.28 329.6h1.44v1.3h-1.44zM33.44 329.6h5.76v1.3h-5.76zM39.92 329.6h7.20v1.3h-7.20zM47.84 329.6h4.32v1.3h-4.32zM52.88 329.6h2.16v1.3h-2.16zM55.76 329.6h3.60v1.3h-3.60zM60.08 329.6h0.72v1.3h-0.72zM61.52 329.6h0.72v1.3h-0.72zM62.96 329.6h5.04v1.3h-5.04zM68.72 329.6h2.88v1.3h-2.88zM72.32 329.6h6.48v1.3h-6.48zM79.52 329.6h9.36v1.3h-9.36zM89.60 329.6h2.16v1.3h-2.16zM92.48 329.6h3.60v1.3h-3.60zM96.80 329.6h0.72v1.3h-0.72zM98.24 329.6h5.76v1.3h-5.76zM104.72 329.6h5.04v1.3h-5.04zM110.48 329.6h2.88v1.3h-2.88zM114.08 329.6h0.72v1.3h-0.72zM115.52 329.6h2.88v1.3h-2.88zM22.64 335.6h4.32v1.3h-4.32zM27.68 335.6h2.88v1.3h-2.88zM31.28 335.6h1.44v1.3h-1.44zM33.44 335.6h5.76v1.3h-5.76zM39.92 335.6h7.20v1.3h-7.20zM47.84 335.6h4.32v1.3h-4.32zM52.88 335.6h2.16v1.3h-2.16zM55.76 335.6h3.60v1.3h-3.60zM60.08 335.6h0.72v1.3h-0.72zM61.52 335.6h5.04v1.3h-5.04zM67.28 335.6h1.44v1.3h-1.44zM69.44 335.6h4.32v1.3h-4.32zM74.48 335.6h0.72v1.3h-0.72zM75.92 335.6h5.04v1.3h-5.04zM81.68 335.6h2.88v1.3h-2.88zM85.28 335.6h0.72v1.3h-0.72zM86.72 335.6h5.04v1.3h-5.04zM92.48 335.6h2.88v1.3h-2.88zM96.08 335.6h6.48v1.3h-6.48zM103.28 335.6h9.36v1.3h-9.36zM113.36 335.6h2.16v1.3h-2.16zM116.24 335.6h2.16v1.3h-2.16zM22.64 341.6h4.32v1.3h-4.32zM27.68 341.6h2.88v1.3h-2.88zM31.28 341.6h1.44v1.3h-1.44zM33.44 341.6h5.76v1.3h-5.76zM39.92 341.6h7.20v1.3h-7.20zM47.84 341.6h4.32v1.3h-4.32zM52.88 341.6h2.16v1.3h-2.16zM55.76 341.6h3.60v1.3h-3.60zM60.08 341.6h0.72v1.3h-0.72zM61.52 341.6h5.04v1.3h-5.04zM67.28 341.6h1.44v1.3h-1.44zM69.44 341.6h4.32v1.3h-4.32zM74.48 341.6h0.72v1.3h-0.72zM75.92 341.6h6.48v1.3h-6.48zM83.12 341.6h2.88v1.3h-2.88zM86.72 341.6h0.72v1.3h-0.72zM88.16 341.6h5.04v1.3h-5.04zM93.92 341.6h2.88v1.3h-2.88zM97.52 341.6h6.48v1.3h-6.48zM104.72 341.6h9.36v1.3h-9.36zM19.76 351.6h4.32v1.3h-4.32zM24.80 351.6h2.88v1.3h-2.88zM28.40 351.6h1.44v1.3h-1.44zM30.56 351.6h5.76v1.3h-5.76zM37.04 351.6h7.20v1.3h-7.20zM44.96 351.6h5.04v1.3h-5.04zM50.72 351.6h2.88v1.3h-2.88zM54.32 351.6h6.48v1.3h-6.48zM61.52 351.6h9.36v1.3h-9.36zM71.60 351.6h2.16v1.3h-2.16zM74.48 351.6h3.60v1.3h-3.60zM78.80 351.6h0.72v1.3h-0.72zM80.24 351.6h2.88v1.3h-2.88zM83.84 351.6h5.04v1.3h-5.04zM89.60 351.6h1.44v1.3h-1.44zM19.76 357.6h4.32v1.3h-4.32zM24.80 357.6h2.88v1.3h-2.88zM28.40 357.6h1.44v1.3h-1.44zM30.56 357.6h5.76v1.3h-5.76zM37.04 357.6h7.20v1.3h-7.20zM44.96 357.6h5.04v1.3h-5.04zM50.72 357.6h2.88v1.3h-2.88zM54.32 357.6h6.48v1.3h-6.48zM61.52 357.6h9.36v1.3h-9.36zM71.60 357.6h5.76v1.3h-5.76zM78.08 357.6h5.04v1.3h-5.04zM83.84 357.6h2.88v1.3h-2.88zM87.44 357.6h6.48v1.3h-6.48zM94.64 357.6h9.36v1.3h-9.36zM104.72 357.6h2.16v1.3h-2.16zM107.60 357.6h3.60v1.3h-3.60zM19.76 363.6h4.32v1.3h-4.32zM24.80 363.6h2.88v1.3h-2.88zM28.40 363.6h1.44v1.3h-1.44zM30.56 363.6h5.76v1.3h-5.76zM37.04 363.6h7.20v1.3h-7.20zM44.96 363.6h5.04v1.3h-5.04zM50.72 363.6h2.88v1.3h-2.88zM54.32 363.6h6.48v1.3h-6.48zM61.52 363.6h9.36v1.3h-9.36zM71.60 363.6h5.76v1.3h-5.76zM78.08 363.6h5.04v1.3h-5.04zM83.84 363.6h2.88v1.3h-2.88zM87.44 363.6h6.48v1.3h-6.48zM94.64 363.6h9.36v1.3h-9.36zM104.72 363.6h2.16v1.3h-2.16zM107.60 363.6h3.60v1.3h-3.60zM19.76 369.6h4.32v1.3h-4.32zM24.80 369.6h2.88v1.3h-2.88zM28.40 369.6h1.44v1.3h-1.44zM30.56 369.6h5.76v1.3h-5.76zM37.04 369.6h7.20v1.3h-7.20zM44.96 369.6h5.04v1.3h-5.04zM50.72 369.6h2.88v1.3h-2.88zM54.32 369.6h6.48v1.3h-6.48zM61.52 369.6h9.36v1.3h-9.36zM71.60 369.6h5.04v1.3h-5.04zM77.36 369.6h5.04v1.3h-5.04zM83.12 369.6h2.88v1.3h-2.88zM86.72 369.6h6.48v1.3h-6.48zM93.92 369.6h9.36v1.3h-9.36zM104.00 369.6h2.88v1.3h-2.88zM28.40 373.6h7.20v1.3h-7.20zM28.40 375.6h6.48v1.3h-6.48zM21.20 379.6h4.32v1.3h-4.32zM26.24 379.6h2.88v1.3h-2.88zM29.84 379.6h1.44v1.3h-1.44zM32.00 379.6h5.76v1.3h-5.76zM38.48 379.6h7.20v1.3h-7.20zM46.40 379.6h5.76v1.3h-5.76zM52.88 379.6h0.72v1.3h-0.72zM54.32 379.6h2.16v1.3h-2.16zM57.20 379.6h3.60v1.3h-3.60zM61.52 379.6h0.72v1.3h-0.72zM62.96 379.6h5.04v1.3h-5.04zM68.72 379.6h5.04v1.3h-5.04zM74.48 379.6h2.88v1.3h-2.88zM78.08 379.6h6.48v1.3h-6.48zM85.28 379.6h9.36v1.3h-9.36zM95.36 379.6h2.16v1.3h-2.16zM98.24 379.6h4.32v1.3h-4.32zM21.92 381.6h6.48v1.3h-6.48zM21.20 391.6h4.32v1.3h-4.32zM26.24 391.6h2.88v1.3h-2.88zM29.84 391.6h1.44v1.3h-1.44zM32.00 391.6h5.76v1.3h-5.76zM38.48 391.6h7.20v1.3h-7.20zM46.40 391.6h5.76v1.3h-5.76zM52.88 391.6h0.72v1.3h-0.72zM54.32 391.6h2.16v1.3h-2.16zM57.20 391.6h3.60v1.3h-3.60zM61.52 391.6h0.72v1.3h-0.72zM62.96 391.6h5.04v1.3h-5.04zM68.72 391.6h1.44v1.3h-1.44zM70.88 391.6h5.04v1.3h-5.04zM76.64 391.6h2.88v1.3h-2.88zM80.24 391.6h6.48v1.3h-6.48zM87.44 391.6h9.36v1.3h-9.36zM97.52 391.6h2.16v1.3h-2.16zM100.40 391.6h2.16v1.3h-2.16zM21.92 393.6h6.48v1.3h-6.48zM21.20 399.6h4.32v1.3h-4.32zM26.24 399.6h2.88v1.3h-2.88zM29.84 399.6h1.44v1.3h-1.44zM32.00 399.6h5.76v1.3h-5.76zM38.48 399.6h7.20v1.3h-7.20zM46.40 399.6h5.76v1.3h-5.76zM52.88 399.6h0.72v1.3h-0.72zM54.32 399.6h2.16v1.3h-2.16zM57.20 399.6h3.60v1.3h-3.60zM61.52 399.6h0.72v1.3h-0.72zM62.96 399.6h7.20v1.3h-7.20zM70.88 399.6h5.04v1.3h-5.04zM76.64 399.6h2.88v1.3h-2.88zM80.24 399.6h6.48v1.3h-6.48zM87.44 399.6h9.36v1.3h-9.36zM97.52 399.6h2.16v1.3h-2.16zM100.40 399.6h2.16v1.3h-2.16zM21.92 401.6h8.64v1.3h-8.64zM29.84 405.6h5.76v1.3h-5.76zM40.64 405.6h6.48v1.3h-6.48zM29.84 407.6h5.76v1.3h-5.76zM40.64 407.6h5.76v1.3h-5.76zM29.84 409.6h5.76v1.3h-5.76zM40.64 409.6h6.48v1.3h-6.48zM21.20 415.6h4.32v1.3h-4.32zM26.24 415.6h2.88v1.3h-2.88zM29.84 415.6h1.44v1.3h-1.44zM32.00 415.6h5.76v1.3h-5.76zM38.48 415.6h7.20v1.3h-7.20zM46.40 415.6h5.76v1.3h-5.76zM52.88 415.6h0.72v1.3h-0.72zM54.32 415.6h2.16v1.3h-2.16zM57.20 415.6h3.60v1.3h-3.60zM61.52 415.6h0.72v1.3h-0.72zM62.96 415.6h2.88v1.3h-2.88zM66.56 415.6h5.04v1.3h-5.04zM72.32 415.6h2.88v1.3h-2.88zM75.92 415.6h6.48v1.3h-6.48zM83.12 415.6h9.36v1.3h-9.36zM93.20 415.6h2.16v1.3h-2.16zM96.08 415.6h3.60v1.3h-3.60zM100.40 415.6h0.72v1.3h-0.72zM101.84 415.6h5.76v1.3h-5.76zM108.32 415.6h4.32v1.3h-4.32zM21.20 421.6h4.32v1.3h-4.32zM26.24 421.6h2.88v1.3h-2.88zM29.84 421.6h1.44v1.3h-1.44zM32.00 421.6h5.76v1.3h-5.76zM38.48 421.6h7.20v1.3h-7.20zM46.40 421.6h5.76v1.3h-5.76zM52.88 421.6h0.72v1.3h-0.72zM54.32 421.6h5.76v1.3h-5.76zM60.80 421.6h5.04v1.3h-5.04zM66.56 421.6h2.88v1.3h-2.88zM70.16 421.6h6.48v1.3h-6.48zM77.36 421.6h9.36v1.3h-9.36zM87.44 421.6h2.16v1.3h-2.16zM90.32 421.6h3.60v1.3h-3.60zM94.64 421.6h0.72v1.3h-0.72zM96.08 421.6h5.76v1.3h-5.76zM102.56 421.6h5.04v1.3h-5.04zM108.32 421.6h2.88v1.3h-2.88zM111.92 421.6h0.72v1.3h-0.72zM113.36 421.6h5.04v1.3h-5.04zM21.20 427.6h4.32v1.3h-4.32zM26.24 427.6h2.88v1.3h-2.88zM29.84 427.6h1.44v1.3h-1.44zM32.00 427.6h5.76v1.3h-5.76zM38.48 427.6h7.20v1.3h-7.20zM46.40 427.6h5.76v1.3h-5.76zM52.88 427.6h0.72v1.3h-0.72zM54.32 427.6h5.76v1.3h-5.76zM60.80 427.6h5.04v1.3h-5.04zM66.56 427.6h2.88v1.3h-2.88zM70.16 427.6h6.48v1.3h-6.48zM77.36 427.6h9.36v1.3h-9.36zM87.44 427.6h2.16v1.3h-2.16zM90.32 427.6h3.60v1.3h-3.60zM94.64 427.6h0.72v1.3h-0.72zM96.08 427.6h2.16v1.3h-2.16zM21.20 433.6h4.32v1.3h-4.32zM26.24 433.6h2.88v1.3h-2.88zM29.84 433.6h1.44v1.3h-1.44zM32.00 433.6h5.76v1.3h-5.76zM38.48 433.6h7.20v1.3h-7.20zM46.40 433.6h5.76v1.3h-5.76zM52.88 433.6h0.72v1.3h-0.72zM54.32 433.6h5.04v1.3h-5.04zM60.08 433.6h5.04v1.3h-5.04zM65.84 433.6h2.88v1.3h-2.88zM69.44 433.6h6.48v1.3h-6.48zM76.64 433.6h9.36v1.3h-9.36zM86.72 433.6h2.16v1.3h-2.16zM89.60 433.6h3.60v1.3h-3.60zM93.92 433.6h0.72v1.3h-0.72zM95.36 433.6h5.76v1.3h-5.76zM101.84 433.6h2.16v1.3h-2.16zM26.96 441.6h7.92v1.3h-7.92zM35.60 441.6h1.44v1.3h-1.44zM37.76 441.6h2.16v1.3h-2.16zM40.64 441.6h5.04v1.3h-5.04zM46.40 441.6h1.44v1.3h-1.44zM21.20 445.6h4.32v1.3h-4.32zM26.24 445.6h2.88v1.3h-2.88zM29.84 445.6h1.44v1.3h-1.44zM32.00 445.6h7.20v1.3h-7.20zM39.92 445.6h3.60v1.3h-3.60zM44.24 445.6h7.20v1.3h-7.20zM52.16 445.6h2.16v1.3h-2.16zM55.04 445.6h3.60v1.3h-3.60zM59.36 445.6h0.72v1.3h-0.72zM60.80 445.6h0.72v1.3h-0.72zM62.24 445.6h0.72v1.3h-0.72zM63.68 445.6h0.72v1.3h-0.72zM65.12 445.6h5.04v1.3h-5.04zM70.88 445.6h2.88v1.3h-2.88zM74.48 445.6h6.48v1.3h-6.48zM81.68 445.6h9.36v1.3h-9.36zM91.76 445.6h2.16v1.3h-2.16zM94.64 445.6h3.60v1.3h-3.60zM98.96 445.6h0.72v1.3h-0.72zM100.40 445.6h1.44v1.3h-1.44zM21.92 447.6h5.76v1.3h-5.76zM21.20 453.6h4.32v1.3h-4.32zM26.24 453.6h2.88v1.3h-2.88zM29.84 453.6h1.44v1.3h-1.44zM32.00 453.6h7.20v1.3h-7.20zM39.92 453.6h3.60v1.3h-3.60zM44.24 453.6h7.20v1.3h-7.20zM52.16 453.6h2.16v1.3h-2.16zM55.04 453.6h3.60v1.3h-3.60zM59.36 453.6h0.72v1.3h-0.72zM60.80 453.6h0.72v1.3h-0.72zM62.24 453.6h5.04v1.3h-5.04zM68.00 453.6h2.88v1.3h-2.88zM71.60 453.6h6.48v1.3h-6.48zM78.80 453.6h9.36v1.3h-9.36zM88.88 453.6h2.16v1.3h-2.16zM91.76 453.6h3.60v1.3h-3.60zM96.08 453.6h0.72v1.3h-0.72zM97.52 453.6h1.44v1.3h-1.44zM21.92 455.6h4.32v1.3h-4.32zM29.84 459.6h5.76v1.3h-5.76zM40.64 459.6h6.48v1.3h-6.48zM29.84 461.6h5.76v1.3h-5.76zM40.64 461.6h5.76v1.3h-5.76zM19.76 467.6h4.32v1.3h-4.32zM24.80 467.6h2.88v1.3h-2.88zM28.40 467.6h1.44v1.3h-1.44zM30.56 467.6h7.20v1.3h-7.20zM38.48 467.6h3.60v1.3h-3.60zM42.80 467.6h7.20v1.3h-7.20zM50.72 467.6h2.16v1.3h-2.16zM53.60 467.6h3.60v1.3h-3.60zM57.92 467.6h0.72v1.3h-0.72zM59.36 467.6h5.04v1.3h-5.04zM65.12 467.6h7.20v1.3h-7.20zM73.04 467.6h0.72v1.3h-0.72zM74.48 467.6h5.04v1.3h-5.04zM80.24 467.6h2.88v1.3h-2.88zM83.84 467.6h6.48v1.3h-6.48zM91.04 467.6h9.36v1.3h-9.36zM101.12 467.6h2.16v1.3h-2.16zM104.00 467.6h3.60v1.3h-3.60zM108.32 467.6h0.72v1.3h-0.72zM109.76 467.6h1.44v1.3h-1.44zM19.76 473.6h4.32v1.3h-4.32zM24.80 473.6h2.88v1.3h-2.88zM28.40 473.6h1.44v1.3h-1.44zM30.56 473.6h7.20v1.3h-7.20zM38.48 473.6h3.60v1.3h-3.60zM42.80 473.6h7.20v1.3h-7.20zM50.72 473.6h2.16v1.3h-2.16zM53.60 473.6h3.60v1.3h-3.60zM57.92 473.6h0.72v1.3h-0.72zM59.36 473.6h5.04v1.3h-5.04zM65.12 473.6h7.20v1.3h-7.20zM73.04 473.6h0.72v1.3h-0.72zM74.48 473.6h5.04v1.3h-5.04zM80.24 473.6h2.88v1.3h-2.88zM83.84 473.6h7.20v1.3h-7.20zM19.76 479.6h4.32v1.3h-4.32zM24.80 479.6h2.88v1.3h-2.88zM28.40 479.6h1.44v1.3h-1.44zM30.56 479.6h7.20v1.3h-7.20zM38.48 479.6h3.60v1.3h-3.60zM42.80 479.6h7.20v1.3h-7.20zM50.72 479.6h2.16v1.3h-2.16zM53.60 479.6h3.60v1.3h-3.60zM57.92 479.6h0.72v1.3h-0.72zM59.36 479.6h5.04v1.3h-5.04zM65.12 479.6h7.20v1.3h-7.20zM73.04 479.6h0.72v1.3h-0.72zM74.48 479.6h5.04v1.3h-5.04zM80.24 479.6h2.88v1.3h-2.88zM83.84 479.6h6.48v1.3h-6.48zM91.04 479.6h9.36v1.3h-9.36zM101.12 479.6h2.16v1.3h-2.16zM104.00 479.6h3.60v1.3h-3.60zM108.32 479.6h0.72v1.3h-0.72zM109.76 479.6h1.44v1.3h-1.44zM19.76 485.6h4.32v1.3h-4.32zM24.80 485.6h2.88v1.3h-2.88zM28.40 485.6h1.44v1.3h-1.44zM30.56 485.6h7.20v1.3h-7.20zM38.48 485.6h3.60v1.3h-3.60zM42.80 485.6h7.20v1.3h-7.20zM50.72 485.6h2.16v1.3h-2.16zM53.60 485.6h3.60v1.3h-3.60zM57.92 485.6h0.72v1.3h-0.72zM59.36 485.6h5.04v1.3h-5.04zM65.12 485.6h7.20v1.3h-7.20zM73.04 485.6h0.72v1.3h-0.72zM74.48 485.6h5.04v1.3h-5.04zM80.24 485.6h2.88v1.3h-2.88zM83.84 485.6h6.48v1.3h-6.48zM91.04 485.6h9.36v1.3h-9.36zM101.12 485.6h1.44v1.3h-1.44zM19.76 491.6h4.32v1.3h-4.32zM24.80 491.6h2.88v1.3h-2.88zM28.40 491.6h1.44v1.3h-1.44zM30.56 491.6h7.20v1.3h-7.20zM38.48 491.6h3.60v1.3h-3.60zM42.80 491.6h7.20v1.3h-7.20zM50.72 491.6h2.16v1.3h-2.16zM53.60 491.6h3.60v1.3h-3.60zM57.92 491.6h0.72v1.3h-0.72zM59.36 491.6h5.04v1.3h-5.04zM65.12 491.6h7.20v1.3h-7.20zM73.04 491.6h0.72v1.3h-0.72zM74.48 491.6h5.04v1.3h-5.04zM80.24 491.6h2.88v1.3h-2.88zM83.84 491.6h6.48v1.3h-6.48zM91.04 491.6h9.36v1.3h-9.36zM101.12 491.6h2.16v1.3h-2.16zM104.00 491.6h3.60v1.3h-3.60zM108.32 491.6h0.72v1.3h-0.72zM109.76 491.6h1.44v1.3h-1.44zM19.76 497.6h4.32v1.3h-4.32zM24.80 497.6h2.88v1.3h-2.88zM28.40 497.6h1.44v1.3h-1.44zM30.56 497.6h7.20v1.3h-7.20zM38.48 497.6h3.60v1.3h-3.60zM42.80 497.6h7.20v1.3h-7.20zM50.72 497.6h2.16v1.3h-2.16zM53.60 497.6h3.60v1.3h-3.60zM57.92 497.6h0.72v1.3h-0.72zM59.36 497.6h5.04v1.3h-5.04zM65.12 497.6h7.20v1.3h-7.20zM73.04 497.6h0.72v1.3h-0.72zM74.48 497.6h5.04v1.3h-5.04zM80.24 497.6h2.88v1.3h-2.88zM83.84 497.6h6.48v1.3h-6.48zM91.04 497.6h9.36v1.3h-9.36zM101.12 497.6h2.16v1.3h-2.16zM104.00 497.6h3.60v1.3h-3.60zM108.32 497.6h0.72v1.3h-0.72zM109.76 497.6h5.76v1.3h-5.76zM116.24 497.6h2.36v1.3h-2.36zM19.76 503.6h4.32v1.3h-4.32zM24.80 503.6h2.88v1.3h-2.88zM28.40 503.6h1.44v1.3h-1.44zM30.56 503.6h7.20v1.3h-7.20zM38.48 503.6h3.60v1.3h-3.60zM42.80 503.6h7.20v1.3h-7.20zM50.72 503.6h2.16v1.3h-2.16zM53.60 503.6h3.60v1.3h-3.60zM57.92 503.6h0.72v1.3h-0.72zM59.36 503.6h5.04v1.3h-5.04zM65.12 503.6h7.20v1.3h-7.20zM73.04 503.6h0.72v1.3h-0.72zM74.48 503.6h5.04v1.3h-5.04zM80.24 503.6h2.88v1.3h-2.88zM83.84 503.6h6.48v1.3h-6.48zM91.04 503.6h9.36v1.3h-9.36zM101.12 503.6h2.16v1.3h-2.16zM104.00 503.6h3.60v1.3h-3.60zM108.32 503.6h0.72v1.3h-0.72zM109.76 503.6h5.76v1.3h-5.76zM19.76 509.6h4.32v1.3h-4.32zM24.80 509.6h2.88v1.3h-2.88zM28.40 509.6h1.44v1.3h-1.44zM30.56 509.6h7.20v1.3h-7.20zM38.48 509.6h3.60v1.3h-3.60zM42.80 509.6h7.20v1.3h-7.20zM50.72 509.6h2.16v1.3h-2.16zM53.60 509.6h3.60v1.3h-3.60zM57.92 509.6h0.72v1.3h-0.72zM59.36 509.6h5.04v1.3h-5.04zM65.12 509.6h7.20v1.3h-7.20zM73.04 509.6h0.72v1.3h-0.72zM74.48 509.6h5.04v1.3h-5.04zM80.24 509.6h2.88v1.3h-2.88zM83.84 509.6h6.48v1.3h-6.48zM91.04 509.6h5.76v1.3h-5.76zM26.96 515.6h7.92v1.3h-7.92zM35.60 515.6h1.44v1.3h-1.44zM37.76 515.6h3.60v1.3h-3.60zM42.08 515.6h7.92v1.3h-7.92zM19.76 519.6h4.32v1.3h-4.32zM24.80 519.6h2.88v1.3h-2.88zM28.40 519.6h1.44v1.3h-1.44zM30.56 519.6h7.20v1.3h-7.20zM38.48 519.6h3.60v1.3h-3.60zM42.80 519.6h7.20v1.3h-7.20zM50.72 519.6h2.16v1.3h-2.16zM53.60 519.6h3.60v1.3h-3.60zM57.92 519.6h0.72v1.3h-0.72zM59.36 519.6h6.48v1.3h-6.48zM66.56 519.6h3.60v1.3h-3.60zM70.88 519.6h0.72v1.3h-0.72zM72.32 519.6h5.04v1.3h-5.04zM78.08 519.6h2.88v1.3h-2.88zM81.68 519.6h6.48v1.3h-6.48zM88.88 519.6h9.36v1.3h-9.36zM98.96 519.6h2.16v1.3h-2.16zM20.48 521.6h7.92v1.3h-7.92zM28.40 525.6h5.76v1.3h-5.76zM39.20 525.6h6.48v1.3h-6.48zM28.40 527.6h5.76v1.3h-5.76zM39.20 527.6h5.76v1.3h-5.76zM28.40 529.6h5.76v1.3h-5.76zM39.20 529.6h6.48v1.3h-6.48zM19.76 535.6h4.32v1.3h-4.32zM24.80 535.6h2.88v1.3h-2.88zM28.40 535.6h1.44v1.3h-1.44zM30.56 535.6h7.20v1.3h-7.20zM38.48 535.6h3.60v1.3h-3.60zM42.80 535.6h7.20v1.3h-7.20zM50.72 535.6h2.16v1.3h-2.16zM53.60 535.6h3.60v1.3h-3.60zM57.92 535.6h0.72v1.3h-0.72zM59.36 535.6h5.04v1.3h-5.04zM65.12 535.6h5.04v1.3h-5.04zM70.88 535.6h2.88v1.3h-2.88zM74.48 535.6h6.48v1.3h-6.48zM81.68 535.6h9.36v1.3h-9.36zM91.76 535.6h2.16v1.3h-2.16zM94.64 535.6h3.60v1.3h-3.60zM98.96 535.6h0.72v1.3h-0.72zM100.40 535.6h1.44v1.3h-1.44zM20.48 537.6h6.48v1.3h-6.48zM19.76 543.6h4.32v1.3h-4.32zM24.80 543.6h2.88v1.3h-2.88zM28.40 543.6h1.44v1.3h-1.44zM30.56 543.6h7.20v1.3h-7.20zM38.48 543.6h3.60v1.3h-3.60zM42.80 543.6h7.20v1.3h-7.20zM50.72 543.6h2.16v1.3h-2.16zM53.60 543.6h3.60v1.3h-3.60zM57.92 543.6h0.72v1.3h-0.72zM59.36 543.6h2.16v1.3h-2.16zM62.24 543.6h0.72v1.3h-0.72zM63.68 543.6h5.04v1.3h-5.04zM69.44 543.6h2.88v1.3h-2.88zM73.04 543.6h6.48v1.3h-6.48zM80.24 543.6h9.36v1.3h-9.36zM90.32 543.6h2.16v1.3h-2.16zM93.20 543.6h3.60v1.3h-3.60zM97.52 543.6h0.72v1.3h-0.72zM98.96 543.6h5.76v1.3h-5.76zM105.44 543.6h5.76v1.3h-5.76zM19.76 549.6h4.32v1.3h-4.32zM24.80 549.6h2.88v1.3h-2.88zM28.40 549.6h1.44v1.3h-1.44zM30.56 549.6h7.20v1.3h-7.20zM38.48 549.6h3.60v1.3h-3.60zM42.80 549.6h7.20v1.3h-7.20zM50.72 549.6h2.16v1.3h-2.16zM53.60 549.6h3.60v1.3h-3.60zM57.92 549.6h0.72v1.3h-0.72zM59.36 549.6h2.16v1.3h-2.16zM62.24 549.6h0.72v1.3h-0.72zM63.68 549.6h5.04v1.3h-5.04zM69.44 549.6h2.88v1.3h-2.88zM73.04 549.6h6.48v1.3h-6.48zM80.24 549.6h9.36v1.3h-9.36zM90.32 549.6h2.16v1.3h-2.16zM93.20 549.6h3.60v1.3h-3.60zM97.52 549.6h0.72v1.3h-0.72zM98.96 549.6h5.76v1.3h-5.76zM105.44 549.6h5.04v1.3h-5.04zM111.20 549.6h2.88v1.3h-2.88zM114.80 549.6h0.72v1.3h-0.72zM19.76 555.6h4.32v1.3h-4.32zM24.80 555.6h2.88v1.3h-2.88zM28.40 555.6h1.44v1.3h-1.44zM30.56 555.6h7.20v1.3h-7.20zM38.48 555.6h3.60v1.3h-3.60zM42.80 555.6h7.20v1.3h-7.20zM50.72 555.6h2.16v1.3h-2.16zM53.60 555.6h3.60v1.3h-3.60zM57.92 555.6h0.72v1.3h-0.72zM59.36 555.6h2.16v1.3h-2.16zM62.24 555.6h0.72v1.3h-0.72zM63.68 555.6h5.04v1.3h-5.04zM69.44 555.6h2.88v1.3h-2.88zM73.04 555.6h6.48v1.3h-6.48zM80.24 555.6h9.36v1.3h-9.36zM90.32 555.6h2.16v1.3h-2.16zM93.20 555.6h3.60v1.3h-3.60zM19.76 561.6h4.32v1.3h-4.32zM24.80 561.6h2.88v1.3h-2.88zM28.40 561.6h1.44v1.3h-1.44zM30.56 561.6h7.20v1.3h-7.20zM38.48 561.6h3.60v1.3h-3.60zM42.80 561.6h7.20v1.3h-7.20zM50.72 561.6h2.16v1.3h-2.16zM53.60 561.6h3.60v1.3h-3.60zM57.92 561.6h0.72v1.3h-0.72zM59.36 561.6h2.16v1.3h-2.16zM62.24 561.6h0.72v1.3h-0.72zM63.68 561.6h5.04v1.3h-5.04zM69.44 561.6h2.88v1.3h-2.88zM73.04 561.6h6.48v1.3h-6.48zM80.24 561.6h9.36v1.3h-9.36zM90.32 561.6h2.16v1.3h-2.16zM93.20 561.6h3.60v1.3h-3.60zM97.52 561.6h0.72v1.3h-0.72zM98.96 561.6h3.60v1.3h-3.60zM26.24 571.6h6.48v1.3h-6.48zM19.76 577.6h4.32v1.3h-4.32zM24.80 577.6h2.88v1.3h-2.88zM28.40 577.6h1.44v1.3h-1.44zM30.56 577.6h7.20v1.3h-7.20zM38.48 577.6h3.60v1.3h-3.60zM42.80 577.6h7.20v1.3h-7.20zM50.72 577.6h2.16v1.3h-2.16zM53.60 577.6h3.60v1.3h-3.60zM57.92 577.6h0.72v1.3h-0.72zM59.36 577.6h5.76v1.3h-5.76zM65.84 577.6h0.72v1.3h-0.72zM67.28 577.6h5.04v1.3h-5.04zM73.04 577.6h2.88v1.3h-2.88zM76.64 577.6h6.48v1.3h-6.48zM83.84 577.6h9.36v1.3h-9.36zM93.92 577.6h2.16v1.3h-2.16zM96.80 577.6h4.32v1.3h-4.32zM20.48 579.6h7.20v1.3h-7.20zM28.40 583.6h5.76v1.3h-5.76zM39.20 583.6h6.48v1.3h-6.48zM28.40 585.6h5.76v1.3h-5.76zM39.20 585.6h5.76v1.3h-5.76zM28.40 587.6h5.76v1.3h-5.76zM39.20 587.6h6.48v1.3h-6.48zM28.40 589.6h5.76v1.3h-5.76zM39.20 589.6h10.80v1.3h-10.80zM19.76 595.6h4.32v1.3h-4.32zM24.80 595.6h2.88v1.3h-2.88zM28.40 595.6h1.44v1.3h-1.44zM30.56 595.6h7.20v1.3h-7.20zM38.48 595.6h3.60v1.3h-3.60zM42.80 595.6h7.20v1.3h-7.20zM50.72 595.6h2.16v1.3h-2.16zM53.60 595.6h3.60v1.3h-3.60zM57.92 595.6h0.72v1.3h-0.72zM59.36 595.6h5.76v1.3h-5.76zM65.84 595.6h4.32v1.3h-4.32zM70.88 595.6h0.72v1.3h-0.72zM72.32 595.6h5.04v1.3h-5.04zM78.08 595.6h5.04v1.3h-5.04zM83.84 595.6h2.88v1.3h-2.88zM87.44 595.6h6.48v1.3h-6.48zM94.64 595.6h9.36v1.3h-9.36zM104.72 595.6h2.16v1.3h-2.16zM107.60 595.6h3.60v1.3h-3.60zM19.76 601.6h4.32v1.3h-4.32zM24.80 601.6h2.88v1.3h-2.88zM28.40 601.6h1.44v1.3h-1.44zM30.56 601.6h7.20v1.3h-7.20zM38.48 601.6h3.60v1.3h-3.60zM42.80 601.6h7.20v1.3h-7.20zM50.72 601.6h2.16v1.3h-2.16zM53.60 601.6h3.60v1.3h-3.60zM57.92 601.6h0.72v1.3h-0.72zM59.36 601.6h5.76v1.3h-5.76zM65.84 601.6h4.32v1.3h-4.32zM70.88 601.6h0.72v1.3h-0.72zM72.32 601.6h5.04v1.3h-5.04zM78.08 601.6h5.04v1.3h-5.04zM83.84 601.6h2.88v1.3h-2.88zM87.44 601.6h6.48v1.3h-6.48zM94.64 601.6h9.36v1.3h-9.36zM104.72 601.6h2.16v1.3h-2.16zM107.60 601.6h3.60v1.3h-3.60zM111.92 601.6h0.72v1.3h-0.72zM113.36 601.6h2.16v1.3h-2.16zM19.76 607.6h4.32v1.3h-4.32zM24.80 607.6h2.88v1.3h-2.88zM28.40 607.6h1.44v1.3h-1.44zM30.56 607.6h7.20v1.3h-7.20zM38.48 607.6h3.60v1.3h-3.60zM42.80 607.6h7.20v1.3h-7.20zM50.72 607.6h2.16v1.3h-2.16zM53.60 607.6h3.60v1.3h-3.60zM57.92 607.6h0.72v1.3h-0.72zM59.36 607.6h5.76v1.3h-5.76zM65.84 607.6h4.32v1.3h-4.32zM70.88 607.6h0.72v1.3h-0.72zM72.32 607.6h5.04v1.3h-5.04zM78.08 607.6h5.04v1.3h-5.04zM83.84 607.6h2.88v1.3h-2.88zM87.44 607.6h3.60v1.3h-3.60zM19.76 613.6h4.32v1.3h-4.32zM24.80 613.6h2.88v1.3h-2.88zM28.40 613.6h1.44v1.3h-1.44zM30.56 613.6h7.20v1.3h-7.20zM38.48 613.6h3.60v1.3h-3.60zM42.80 613.6h7.20v1.3h-7.20zM50.72 613.6h2.16v1.3h-2.16zM53.60 613.6h3.60v1.3h-3.60zM57.92 613.6h0.72v1.3h-0.72zM59.36 613.6h5.76v1.3h-5.76zM65.84 613.6h4.32v1.3h-4.32zM70.88 613.6h0.72v1.3h-0.72zM72.32 613.6h5.04v1.3h-5.04zM78.08 613.6h5.04v1.3h-5.04zM83.84 613.6h2.88v1.3h-2.88zM87.44 613.6h6.48v1.3h-6.48zM94.64 613.6h9.36v1.3h-9.36zM104.72 613.6h2.16v1.3h-2.16zM107.60 613.6h3.60v1.3h-3.60zM19.76 619.6h4.32v1.3h-4.32zM24.80 619.6h2.88v1.3h-2.88zM28.40 619.6h1.44v1.3h-1.44zM30.56 619.6h7.20v1.3h-7.20zM38.48 619.6h3.60v1.3h-3.60zM42.80 619.6h7.20v1.3h-7.20zM50.72 619.6h2.16v1.3h-2.16zM53.60 619.6h3.60v1.3h-3.60zM57.92 619.6h0.72v1.3h-0.72zM59.36 619.6h5.76v1.3h-5.76zM65.84 619.6h4.32v1.3h-4.32zM70.88 619.6h0.72v1.3h-0.72zM72.32 619.6h5.04v1.3h-5.04zM78.08 619.6h5.04v1.3h-5.04zM83.84 619.6h2.88v1.3h-2.88zM87.44 619.6h3.60v1.3h-3.60zM19.76 625.6h4.32v1.3h-4.32zM24.80 625.6h2.88v1.3h-2.88zM28.40 625.6h1.44v1.3h-1.44zM30.56 625.6h7.20v1.3h-7.20zM38.48 625.6h3.60v1.3h-3.60zM42.80 625.6h7.20v1.3h-7.20zM50.72 625.6h2.16v1.3h-2.16zM53.60 625.6h3.60v1.3h-3.60zM57.92 625.6h0.72v1.3h-0.72zM59.36 625.6h5.76v1.3h-5.76zM65.84 625.6h4.32v1.3h-4.32zM70.88 625.6h0.72v1.3h-0.72zM72.32 625.6h5.04v1.3h-5.04zM78.08 625.6h5.04v1.3h-5.04zM83.84 625.6h2.88v1.3h-2.88zM87.44 625.6h6.48v1.3h-6.48zM94.64 625.6h9.36v1.3h-9.36zM104.72 625.6h2.16v1.3h-2.16zM107.60 625.6h3.60v1.3h-3.60zM19.76 631.6h4.32v1.3h-4.32zM24.80 631.6h2.88v1.3h-2.88zM28.40 631.6h1.44v1.3h-1.44zM30.56 631.6h7.20v1.3h-7.20zM38.48 631.6h3.60v1.3h-3.60zM42.80 631.6h7.20v1.3h-7.20zM50.72 631.6h2.16v1.3h-2.16zM53.60 631.6h3.60v1.3h-3.60zM57.92 631.6h0.72v1.3h-0.72zM59.36 631.6h5.76v1.3h-5.76zM65.84 631.6h4.32v1.3h-4.32zM70.88 631.6h0.72v1.3h-0.72zM72.32 631.6h5.04v1.3h-5.04zM78.08 631.6h5.04v1.3h-5.04zM83.84 631.6h2.88v1.3h-2.88zM87.44 631.6h6.48v1.3h-6.48zM94.64 631.6h2.16v1.3h-2.16zM19.76 637.6h4.32v1.3h-4.32zM24.80 637.6h2.88v1.3h-2.88zM28.40 637.6h1.44v1.3h-1.44zM30.56 637.6h7.20v1.3h-7.20zM38.48 637.6h3.60v1.3h-3.60zM42.80 637.6h7.20v1.3h-7.20zM50.72 637.6h2.16v1.3h-2.16zM53.60 637.6h3.60v1.3h-3.60zM57.92 637.6h0.72v1.3h-0.72zM59.36 637.6h5.76v1.3h-5.76zM65.84 637.6h4.32v1.3h-4.32zM70.88 637.6h0.72v1.3h-0.72zM72.32 637.6h5.04v1.3h-5.04zM78.08 637.6h5.04v1.3h-5.04zM83.84 637.6h2.88v1.3h-2.88zM87.44 637.6h6.48v1.3h-6.48zM94.64 637.6h9.36v1.3h-9.36zM104.72 637.6h2.16v1.3h-2.16zM19.76 643.6h4.32v1.3h-4.32zM24.80 643.6h2.88v1.3h-2.88zM28.40 643.6h1.44v1.3h-1.44zM30.56 643.6h7.20v1.3h-7.20zM38.48 643.6h3.60v1.3h-3.60zM42.80 643.6h7.20v1.3h-7.20zM50.72 643.6h2.16v1.3h-2.16zM53.60 643.6h3.60v1.3h-3.60zM57.92 643.6h0.72v1.3h-0.72zM59.36 643.6h5.76v1.3h-5.76zM65.84 643.6h4.32v1.3h-4.32zM70.88 643.6h0.72v1.3h-0.72zM72.32 643.6h5.04v1.3h-5.04zM78.08 643.6h5.04v1.3h-5.04zM83.84 643.6h2.88v1.3h-2.88zM87.44 643.6h6.48v1.3h-6.48zM94.64 643.6h9.36v1.3h-9.36zM104.72 643.6h2.16v1.3h-2.16zM107.60 643.6h3.60v1.3h-3.60zM111.92 643.6h0.72v1.3h-0.72zM113.36 643.6h2.16v1.3h-2.16z"/>
<path fill="#d4d4d4" opacity="0.6" d="M29.84 1.6h0.72v1.3h-0.72zM44.24 3.6h3.60v1.3h-3.60zM48.56 3.6h3.60v1.3h-3.60zM52.88 3.6h0.72v1.3h-0.72zM44.24 5.7h3.60v1.3h-3.60zM48.56 5.7h3.60v1.3h-3.60zM52.88 5.7h0.72v1.3h-0.72zM44.24 7.7h3.60v1.3h-3.60zM48.56 7.7h3.60v1.3h-3.60zM52.88 7.7h0.72v1.3h-0.72zM44.24 9.7h3.60v1.3h-3.60zM48.56 9.7h3.60v1.3h-3.60zM52.88 9.7h0.72v1.3h-0.72zM37.04 17.6h5.04v1.3h-5.04zM42.80 17.6h5.04v1.3h-5.04zM48.56 17.6h1.44v1.3h-1.44zM50.72 17.6h2.16v1.3h-2.16zM53.60 17.6h7.20v1.3h-7.20zM33.44 571.6h4.32v1.3h-4.32z"/>
<path fill="#c586c0" opacity="0.6" d="M11.84 1.6h3.60v1.3h-3.60zM22.64 1.6h1.44v1.3h-1.44z"/>
</svg>
<div class="abs" style="left:1628.4px;top:0;width:1px;height:645px;background:#474747"></div>
<div class="abs" style="left:1628.4px;top:0;width:17px;height:1px;background:#474747"></div>
<div class="abs" style="left:1629px;top:59.6px;width:16px;height:2.2px;background:#b0b0b0"></div>
<div class="abs" style="left:0;top:0;width:1509px;height:5px;background:linear-gradient(rgba(0,0,0,0.55),rgba(0,0,0,0.2) 40%,rgba(0,0,0,0))"></div>
</div>
</body></html>
